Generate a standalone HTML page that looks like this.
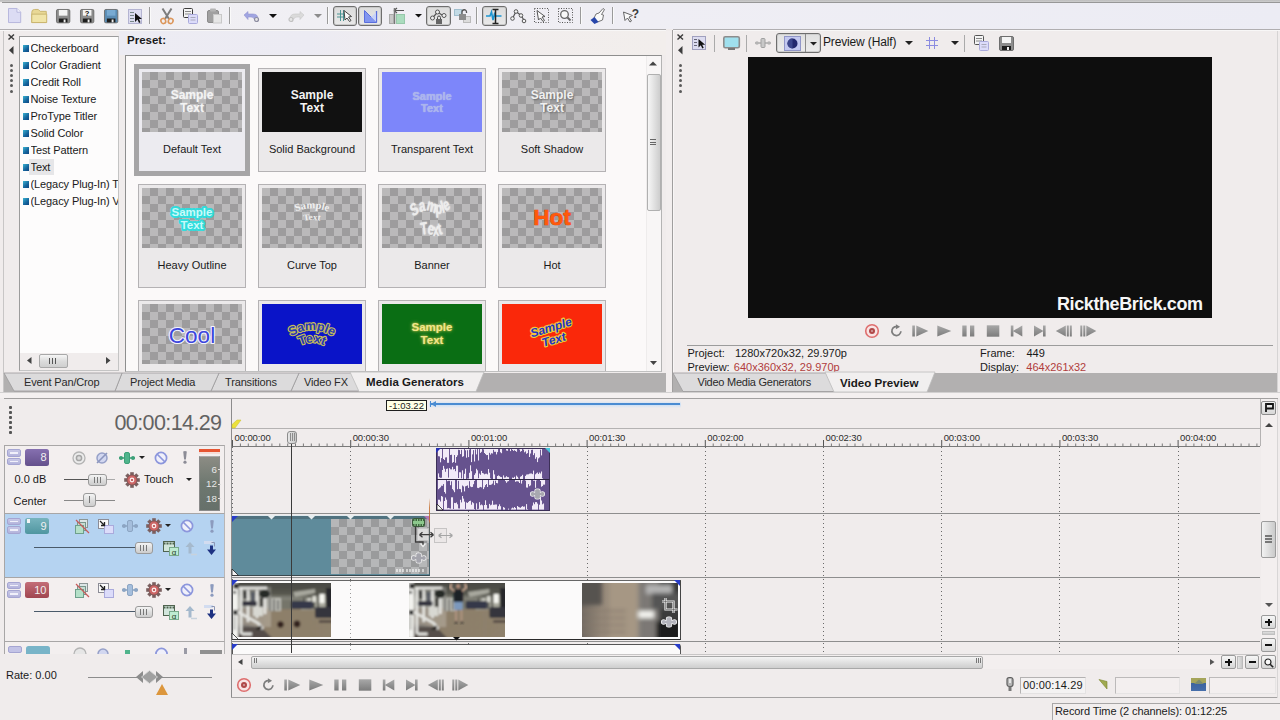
<!DOCTYPE html>
<html><head><meta charset="utf-8"><title>Vegas</title>
<style>
html,body{margin:0;padding:0;}
body{width:1280px;height:720px;overflow:hidden;background:#f0ecec;position:relative;font-family:"Liberation Sans","DejaVu Sans",sans-serif;font-size:11px;color:#1a1a1a;}
div{position:absolute;box-sizing:border-box;}
svg{position:absolute;overflow:visible;}
.t{white-space:nowrap;line-height:13px;font-size:11px;}
.b{font-weight:bold;}
</style></head>
<body>
<div style="left:0px;top:0px;width:1280px;height:2px;background:linear-gradient(#bcbcbc,#cecece);"></div>
<div style="left:2px;top:2px;width:1278px;height:1px;background:#979797;"></div>
<div style="left:0px;top:3px;width:1280px;height:26px;background:linear-gradient(90deg,#f1f0f3,#efeef4 50%,#ececf4);"></div>
<div style="left:0px;top:29px;width:1280px;height:1px;background:#b0aeb0;"></div>
<div style="left:0px;top:30px;width:1280px;height:1px;background:#f8f7f7;"></div>
<svg style="left:8px;top:8px" width="13.2" height="15" viewBox="0 0 14 16"><path d="M0.5 0.5h9l4 4v11h-13z" fill="#dcdcf4" stroke="#b4b4dc"/><path d="M9.5 0.5v4h4" fill="#f4f4ff" stroke="#b4b4dc"/></svg>
<svg style="left:31px;top:9px" width="16.5" height="14" viewBox="0 0 17 15"><path d="M0.5 3.5q0-3 3-3h4l2 2h6.5v12h-15.500z" fill="#e8d896" stroke="#c8b46e"/><path d="M0.500 5.500h16v9h-16z" fill="#f0e4a8" stroke="#c8b46e"/></svg>
<svg style="left:56px;top:9px" width="14.3" height="14.3" viewBox="0 0 15 15"><rect x="0.5" y="0.5" width="14" height="14" rx="1.500" fill="#8c8c8c" stroke="#6e6e6e"/><rect x="3" y="1" width="9" height="6" fill="#f4f4f4"/><rect x="3" y="10" width="9" height="4" fill="#1e1e1e"/><rect x="8" y="11" width="2" height="3" fill="#f0f0f0"/></svg>
<svg style="left:80px;top:9px" width="14.3" height="14.3" viewBox="0 0 15 15"><rect x="0.5" y="0.5" width="14" height="14" rx="1.500" fill="#8c8c8c" stroke="#6e6e6e"/><rect x="3" y="1" width="9" height="6" fill="#f4f4f4"/><rect x="3" y="10" width="9" height="4" fill="#1e1e1e"/><rect x="8" y="11" width="2" height="3" fill="#f0f0f0"/><text x="7.500" y="7" font-size="8" font-weight="bold" text-anchor="middle" fill="#111" font-family="Liberation Sans,sans-serif">?</text></svg>
<svg style="left:104px;top:9px" width="14.3" height="14.3" viewBox="0 0 15 15"><rect x="0.5" y="0.5" width="14" height="14" rx="1.500" fill="#5a8cb4" stroke="#6e6e6e"/><rect x="3" y="1" width="9" height="6" fill="#78aad2"/><rect x="3" y="10" width="9" height="4" fill="#1e1e1e"/><rect x="8" y="11" width="2" height="3" fill="#f0f0f0"/></svg>
<svg style="left:128px;top:9px" width="15" height="15" viewBox="0 0 15 15"><rect x="0.5" y="0.5" width="13" height="14" fill="#dcdcf0" stroke="#b4b4d2"/><path d="M2 3.500h4M2 6.500h4M2 9.500h4M2 12.500h4" stroke="#788" stroke-width="1"/><path d="M7 4v9l2.500-2.500l1.500 3.500l1.500-0.800l-1.500-3.200h3z" fill="#111"/></svg>
<div style="left:149px;top:7px;width:1px;height:17px;background:#9a9a9a;"></div>
<div style="left:150px;top:7px;width:1px;height:17px;background:#fafafa;"></div>
<svg style="left:160px;top:8px" width="14" height="16" viewBox="0 0 14 16"><path d="M2.500 0.500l6.500 10.500M11.500 0.500l-6.500 10.500" stroke="#7d7d7d" stroke-width="2" fill="none"/><ellipse cx="3.300" cy="13" rx="2.300" ry="2.600" fill="none" stroke="#dc965a" stroke-width="1.600" transform="rotate(-25 3.300 13)"/><ellipse cx="10.700" cy="13" rx="2.300" ry="2.600" fill="none" stroke="#dc965a" stroke-width="1.600" transform="rotate(25 10.700 13)"/></svg>
<svg style="left:183px;top:8px" width="16" height="16" viewBox="0 0 16 16"><rect x="0.500" y="0.500" width="9" height="9" rx="1" fill="#f4f4f4" stroke="#3c3c3c"/><path d="M2 3.500h6M2 6h6" stroke="#888"/><rect x="5.500" y="6.500" width="9" height="9" rx="1" fill="#dcdcfa" stroke="#aaaadc"/><path d="M7.500 9.500h5M7.500 12h5" stroke="#aab"/></svg>
<svg style="left:207px;top:8px" width="16" height="16" viewBox="0 0 16 16"><rect x="0.500" y="2.500" width="11" height="12" rx="1.500" fill="#a0a0a0" stroke="#8c8c8c"/><rect x="3" y="0.500" width="6" height="3" rx="1" fill="#b4b4b4"/><rect x="6.500" y="6.500" width="8" height="8.500" fill="#e6e6e6" stroke="#c8c8c8"/></svg>
<div style="left:229px;top:7px;width:1px;height:17px;background:#9a9a9a;"></div>
<div style="left:230px;top:7px;width:1px;height:17px;background:#fafafa;"></div>
<svg style="left:243px;top:11px" width="17" height="12" viewBox="0 0 17 12"><path d="M1 4l4-3.500v2.500h5q5 0 5 5h-4q0-2-3-2h-3v2.500z" fill="#a0a5e1" stroke="#9696d2" stroke-width="0.600"/><circle cx="13.500" cy="8.500" r="2" fill="#e6e6e6" stroke="#8c8ca0" stroke-width="1.200"/></svg>
<svg style="left:269px;top:14px" width="8" height="4.5" viewBox="0 0 8 4.5"><path d="M0 0h8l-4.0 4.0z" fill="#111"/></svg>
<svg style="left:288px;top:11px" width="17" height="12" viewBox="0 0 17 12"><path d="M16 4l-4-3.500v2.500h-5q-5 0-5 5h4q0-2 3-2h3v2.500z" fill="#dadada" stroke="#c8c8c8" stroke-width="0.600"/><circle cx="3" cy="8.500" r="2" fill="#e6e6e6" stroke="#c0c0c0" stroke-width="1.200"/></svg>
<svg style="left:314px;top:14px" width="8" height="4.5" viewBox="0 0 8 4.5"><path d="M0 0h8l-4.0 4.0z" fill="#8c8c8c"/></svg>
<div style="left:327px;top:7px;width:1px;height:17px;background:#9a9a9a;"></div>
<div style="left:328px;top:7px;width:1px;height:17px;background:#fafafa;"></div>
<div style="left:333px;top:6px;width:24px;height:20px;border:1px solid #6e6e6e;border-radius:3px;background:linear-gradient(#dcdcdc,#e9e9e9);box-shadow:inset 0 0 0 1px #c8c8c8;"></div>
<svg style="left:337px;top:8px" width="17" height="16" viewBox="0 0 17 16"><path d="M3.500 2v11M6.500 2v11M0 6h10M0 9h10" stroke="#3c8c8c" stroke-width="0.900"/><path d="M7 2.500l7.500 6l-3 0.500l2.500 3.500l-1.500 1l-2.500-3.500l-2 2z" fill="#fafafa" stroke="#464646" stroke-width="1"/></svg>
<div style="left:358px;top:6px;width:24px;height:20px;border:1px solid #6e6e6e;border-radius:3px;background:linear-gradient(#dcdcdc,#e9e9e9);box-shadow:inset 0 0 0 1px #c8c8c8;"></div>
<svg style="left:364px;top:10px" width="13" height="14" viewBox="0 0 13 14"><path d="M0.500 0.500l12 12h-12z" fill="#8296f0" stroke="#5a6edc"/><path d="M12.500 1v11.500" stroke="#5a6edc" stroke-width="1.300"/><path d="M12 2.500v9.500l-5-5z" fill="#c8d2f8"/></svg>
<svg style="left:389px;top:8px" width="17" height="16" viewBox="0 0 17 16"><path d="M5 2.500h10M5 2.500l3-2.500M5 2.500l3 2.500" stroke="#555" stroke-width="1.200" fill="none"/><path d="M5.500 0v16" stroke="#777" stroke-width="1.500"/><rect x="0.500" y="6.500" width="4" height="9" fill="#c8c8c8" stroke="#aaa"/><rect x="7.500" y="6.500" width="8" height="9" fill="#aadcbe" stroke="#96c8aa"/></svg>
<svg style="left:415px;top:14px" width="7" height="4.0" viewBox="0 0 7 4.0"><path d="M0 0h7l-3.5 3.5z" fill="#111"/></svg>
<div style="left:426px;top:6px;width:25px;height:20px;border:1px solid #6e6e6e;border-radius:3px;background:linear-gradient(#dcdcdc,#e9e9e9);box-shadow:inset 0 0 0 1px #c8c8c8;"></div>
<svg style="left:430px;top:9px" width="17" height="16" viewBox="0 0 17 16"><path d="M2.500 9l5-6l6 4" stroke="#555" stroke-width="1.200" fill="none"/><circle cx="2.500" cy="9" r="2" fill="#f0f0f0" stroke="#555"/><circle cx="7.500" cy="3" r="2" fill="#f0f0f0" stroke="#555"/><circle cx="14" cy="6.500" r="2" fill="#f0f0f0" stroke="#555"/><rect x="6" y="10" width="6" height="5" fill="#666"/><path d="M7.500 10v-1.500a1.500 1.500 0 0 1 3 0v1.500" stroke="#444" fill="none"/></svg>
<svg style="left:454px;top:8px" width="17" height="16" viewBox="0 0 17 16"><rect x="0.500" y="1.500" width="7" height="6" fill="#c3dbe6" stroke="#a0bece"/><rect x="9.500" y="8.500" width="7" height="6" fill="#dcdcdc" stroke="#bbb"/><rect x="5" y="6" width="7" height="6" fill="#8c8c8c"/><path d="M8 6v-2a2.200 2.200 0 0 1 4.500 0v1" stroke="#555" stroke-width="1.300" fill="none"/></svg>
<div style="left:476px;top:7px;width:1px;height:17px;background:#9a9a9a;"></div>
<div style="left:477px;top:7px;width:1px;height:17px;background:#fafafa;"></div>
<div style="left:482px;top:6px;width:25px;height:20px;border:1px solid #6e6e6e;border-radius:3px;background:linear-gradient(#dcdcdc,#e9e9e9);box-shadow:inset 0 0 0 1px #c8c8c8;"></div>
<svg style="left:486px;top:9px" width="17" height="15" viewBox="0 0 17 15"><path d="M0 7h4l1.500-4l1.500 8l1.500-6l1 2h6" stroke="#1e96d2" stroke-width="1.600" fill="none"/><path d="M6.500 0.500h6M6.500 14.500h6M9.500 0.500v14" stroke="#222" stroke-width="1.500"/></svg>
<svg style="left:510px;top:9px" width="17" height="15" viewBox="0 0 17 15"><path d="M2.500 9.500l3.500-7l5 4l3.500 5.500" stroke="#555" stroke-width="1.200" fill="none"/><circle cx="2.500" cy="9.500" r="1.800" fill="#f4f4f4" stroke="#555"/><circle cx="6" cy="2.500" r="1.800" fill="#f4f4f4" stroke="#555"/><circle cx="11" cy="6.500" r="1.800" fill="#f4f4f4" stroke="#555"/><circle cx="14" cy="12" r="1.800" fill="#f4f4f4" stroke="#555"/></svg>
<svg style="left:534px;top:8px" width="16" height="16" viewBox="0 0 16 16"><rect x="0.500" y="0.500" width="14" height="14" fill="none" stroke="#555" stroke-dasharray="1 1.500"/><path d="M3 2.500l8 6l-3 0.500l2.500 3.500l-1.500 1l-2.500-3.500l-2 2z" fill="#fafafa" stroke="#555"/></svg>
<svg style="left:558px;top:8px" width="16" height="16" viewBox="0 0 16 16"><rect x="0.500" y="0.500" width="14" height="14" fill="none" stroke="#555" stroke-dasharray="1 1.500"/><circle cx="6.500" cy="6.500" r="3.800" fill="#f8f8f8" stroke="#666" stroke-width="1.300"/><path d="M9.500 9.500l3 3" stroke="#666" stroke-width="2"/></svg>
<div style="left:580px;top:7px;width:1px;height:17px;background:#9a9a9a;"></div>
<div style="left:581px;top:7px;width:1px;height:17px;background:#fafafa;"></div>
<svg style="left:590px;top:8px" width="16" height="16" viewBox="0 0 16 16"><path d="M4 10l2-4l3-1l4-4.500l1.500 1l-3 5l2 0.500l-1 5l-5 2z" fill="#fafafa" stroke="#666" stroke-width="0.900"/><path d="M0.500 12l4-3l4 5l-4 2z" fill="#2846aa"/></svg>
<div style="left:612px;top:7px;width:1px;height:17px;background:#9a9a9a;"></div>
<div style="left:613px;top:7px;width:1px;height:17px;background:#fafafa;"></div>
<svg style="left:623px;top:9px" width="17" height="15" viewBox="0 0 17 15"><path d="M0.500 3l9 3.500l-3.500 1.500l2.500 4l-1.500 1l-2.500-4l-2.500 2.500z" fill="#fafafa" stroke="#555" stroke-width="0.900"/><text x="12.500" y="9" font-size="12" font-weight="bold" text-anchor="middle" fill="#3c3c3c" font-family="Liberation Sans,sans-serif">?</text></svg>
<div style="left:3px;top:31px;width:1px;height:361px;background:#c8c6c6;"></div>
<svg style="left:8px;top:34px" width="7" height="6" viewBox="0 0 7 6"><path d="M0.500 0.500l5.500 5M6 0.500l-5.500 5" stroke="#3c3c3c" stroke-width="1.500"/></svg>
<svg style="left:9px;top:46px" width="5" height="9" viewBox="0 0 5 9"><path d="M4.500 0v8.500l-4.500-4.200z" fill="#3c3c3c"/></svg>
<div style="left:9.5px;top:63.5px;width:3px;height:3px;background:#5a5a5a;border-radius:1.500px;"></div>
<div style="left:9.5px;top:68.7px;width:3px;height:3px;background:#5a5a5a;border-radius:1.500px;"></div>
<div style="left:9.5px;top:73.9px;width:3px;height:3px;background:#5a5a5a;border-radius:1.500px;"></div>
<div style="left:9.5px;top:79.1px;width:3px;height:3px;background:#5a5a5a;border-radius:1.500px;"></div>
<div style="left:9.5px;top:84.3px;width:3px;height:3px;background:#5a5a5a;border-radius:1.500px;"></div>
<div style="left:9.5px;top:89.5px;width:3px;height:3px;background:#5a5a5a;border-radius:1.500px;"></div>
<div style="left:19px;top:36px;width:100px;height:335px;background:#fdfcfc;border:1px solid #9c9c9c;border-right-color:#c4c4c4;border-bottom-color:#c4c4c4;"></div>
<div style="left:23px;top:45.400000000000006px;width:5.5px;height:7px;background:linear-gradient(135deg,#3cb4d2,#14649c 60%,#0f4682);"></div>
<div class="t" style="left:30.500px;top:42.4px;width:87px;overflow:hidden;letter-spacing:-0.100px">Checkerboard</div>
<div style="left:23px;top:62.400000000000006px;width:5.5px;height:7px;background:linear-gradient(135deg,#3cb4d2,#14649c 60%,#0f4682);"></div>
<div class="t" style="left:30.500px;top:59.4px;width:87px;overflow:hidden;letter-spacing:-0.100px">Color Gradient</div>
<div style="left:23px;top:79.4px;width:5.5px;height:7px;background:linear-gradient(135deg,#3cb4d2,#14649c 60%,#0f4682);"></div>
<div class="t" style="left:30.500px;top:76.4px;width:87px;overflow:hidden;letter-spacing:-0.100px">Credit Roll</div>
<div style="left:23px;top:96.4px;width:5.5px;height:7px;background:linear-gradient(135deg,#3cb4d2,#14649c 60%,#0f4682);"></div>
<div class="t" style="left:30.500px;top:93.4px;width:87px;overflow:hidden;letter-spacing:-0.100px">Noise Texture</div>
<div style="left:23px;top:113.4px;width:5.5px;height:7px;background:linear-gradient(135deg,#3cb4d2,#14649c 60%,#0f4682);"></div>
<div class="t" style="left:30.500px;top:110.4px;width:87px;overflow:hidden;letter-spacing:-0.100px">ProType Titler</div>
<div style="left:23px;top:130.39999999999998px;width:5.5px;height:7px;background:linear-gradient(135deg,#3cb4d2,#14649c 60%,#0f4682);"></div>
<div class="t" style="left:30.500px;top:127.4px;width:87px;overflow:hidden;letter-spacing:-0.100px">Solid Color</div>
<div style="left:23px;top:147.39999999999998px;width:5.5px;height:7px;background:linear-gradient(135deg,#3cb4d2,#14649c 60%,#0f4682);"></div>
<div class="t" style="left:30.500px;top:144.4px;width:87px;overflow:hidden;letter-spacing:-0.100px">Test Pattern</div>
<div style="left:29px;top:159.2px;width:25px;height:16px;background:#e6e6e8;"></div>
<div style="left:23px;top:164.39999999999998px;width:5.5px;height:7px;background:linear-gradient(135deg,#3cb4d2,#14649c 60%,#0f4682);"></div>
<div class="t" style="left:30.500px;top:161.4px;width:87px;overflow:hidden;letter-spacing:-0.100px">Text</div>
<div style="left:23px;top:181.39999999999998px;width:5.5px;height:7px;background:linear-gradient(135deg,#3cb4d2,#14649c 60%,#0f4682);"></div>
<div class="t" style="left:30.500px;top:178.4px;width:87px;overflow:hidden;letter-spacing:-0.100px">(Legacy Plug-In) T</div>
<div style="left:23px;top:198.39999999999998px;width:5.5px;height:7px;background:linear-gradient(135deg,#3cb4d2,#14649c 60%,#0f4682);"></div>
<div class="t" style="left:30.500px;top:195.4px;width:87px;overflow:hidden;letter-spacing:-0.100px">(Legacy Plug-In) V</div>
<div style="left:20px;top:353px;width:98px;height:17px;background:#f0ecec;"></div>
<svg style="left:27px;top:357px" width="5" height="7" viewBox="0 0 5 7"><path d="M4.500 0v7l-4.500-3.500z" fill="#444"/></svg>
<svg style="left:106px;top:357px" width="5" height="7" viewBox="0 0 5 7"><path d="M0 0v7l4.500-3.500z" fill="#444"/></svg>
<div style="left:39px;top:354px;width:29px;height:14px;border:1px solid #a8a8a8;border-radius:2px;background:linear-gradient(#f6f6f6,#dcdcdc 50%,#cfcfcf);"></div>
<div style="left:49px;top:358px;width:1px;height:6px;background:#555;"></div>
<div style="left:52px;top:358px;width:1px;height:6px;background:#555;"></div>
<div style="left:55px;top:358px;width:1px;height:6px;background:#555;"></div>
<div style="left:119px;top:31px;width:547px;height:24px;background:linear-gradient(90deg,#edecf3,#ecebf3 35%,#f1edee 55%,#f2eeec);"></div>
<div class="t" style="left:127px;top:33.5px;font-weight:bold;font-size:11.500px;">Preset:</div>
<div style="left:125px;top:55px;width:537px;height:317px;background:#fbf9f9;border:1px solid #8e8e8e;border-right-color:#b4b4b4;border-bottom-color:#c0c0c0;"></div>
<div style="left:126px;top:56px;width:520px;height:315px;overflow:hidden;">
<div style="left:8px;top:8px;width:116px;height:112px;background:#a6a5a6;"></div>
<div style="left:13px;top:13px;width:106px;height:102px;background:#ecebf0;"></div>
<div style="left:16px;top:16px;width:100px;height:60px;overflow:hidden;background-color:#bab9ba;background-image:linear-gradient(45deg,#9d9c9d 25%,transparent 25%,transparent 75%,#9d9c9d 75%),linear-gradient(45deg,#9d9c9d 25%,transparent 25%,transparent 75%,#9d9c9d 75%);background-size:16px 16px;background-position:0 0,8px 8px;"><div style="left:0;top:17px;width:100px;text-align:center;font-weight:bold;font-size:12px;line-height:13px;color:#f4f4f4;text-shadow:0 0 2px rgba(255,255,255,.6);">Sample<br>Text</div></div>
<div class="t" style="left:12px;top:87px;width:108px;text-align:center;">Default Text</div>
<div style="left:132px;top:12px;width:108px;height:104px;background:#ebe9ea;border:1px solid #b4b2b4;"></div>
<div style="left:136px;top:16px;width:100px;height:60px;overflow:hidden;background:#111111;"><div style="left:0;top:17px;width:100px;text-align:center;font-weight:bold;font-size:12px;line-height:13px;color:#f4f4f4;">Sample<br>Text</div></div>
<div class="t" style="left:132px;top:87px;width:108px;text-align:center;">Solid Background</div>
<div style="left:252px;top:12px;width:108px;height:104px;background:#ebe9ea;border:1px solid #b4b2b4;"></div>
<div style="left:256px;top:16px;width:100px;height:60px;overflow:hidden;background:#7d86fa;"><div style="left:0;top:18px;width:100px;text-align:center;font-weight:bold;font-size:12px;line-height:12px;color:#aab4ee;font-size:11px;text-shadow:0 0 1px #c8d2e6;">Sample<br>Text</div></div>
<div class="t" style="left:252px;top:87px;width:108px;text-align:center;">Transparent Text</div>
<div style="left:372px;top:12px;width:108px;height:104px;background:#ebe9ea;border:1px solid #b4b2b4;"></div>
<div style="left:376px;top:16px;width:100px;height:60px;overflow:hidden;background-color:#bab9ba;background-image:linear-gradient(45deg,#9d9c9d 25%,transparent 25%,transparent 75%,#9d9c9d 75%),linear-gradient(45deg,#9d9c9d 25%,transparent 25%,transparent 75%,#9d9c9d 75%);background-size:16px 16px;background-position:0 0,8px 8px;"><div style="left:0;top:17px;width:100px;text-align:center;font-weight:bold;font-size:12px;line-height:13px;color:#f0f0f0;text-shadow:1px 1px 2px #666;">Sample<br>Text</div></div>
<div class="t" style="left:372px;top:87px;width:108px;text-align:center;">Soft Shadow</div>
<div style="left:12px;top:128px;width:108px;height:104px;background:#ebe9ea;border:1px solid #b4b2b4;"></div>
<div style="left:16px;top:132px;width:100px;height:60px;overflow:hidden;background-color:#bab9ba;background-image:linear-gradient(45deg,#9d9c9d 25%,transparent 25%,transparent 75%,#9d9c9d 75%),linear-gradient(45deg,#9d9c9d 25%,transparent 25%,transparent 75%,#9d9c9d 75%);background-size:16px 16px;background-position:0 0,8px 8px;"><svg style="left:0;top:0" width="100" height="60" viewBox="0 0 100 60" font-family="Liberation Sans,sans-serif" font-weight="bold" text-anchor="middle" ><g style="paint-order:stroke" stroke="#32dcdc" stroke-width="4" stroke-linejoin="round" fill="#c8fafa" font-size="11.500"><text x="50" y="28">Sample</text><text x="50" y="40.500">Text</text></g></svg></div>
<div class="t" style="left:12px;top:203px;width:108px;text-align:center;">Heavy Outline</div>
<div style="left:132px;top:128px;width:108px;height:104px;background:#ebe9ea;border:1px solid #b4b2b4;"></div>
<div style="left:136px;top:132px;width:100px;height:60px;overflow:hidden;background-color:#bab9ba;background-image:linear-gradient(45deg,#9d9c9d 25%,transparent 25%,transparent 75%,#9d9c9d 75%),linear-gradient(45deg,#9d9c9d 25%,transparent 25%,transparent 75%,#9d9c9d 75%);background-size:16px 16px;background-position:0 0,8px 8px;"><svg style="left:0;top:0" width="100" height="60" viewBox="0 0 100 60" font-family="Liberation Sans,sans-serif" font-weight="bold" text-anchor="middle" ><defs><path id="ct1" d="M26 27Q50 14 74 27"/><path id="ct2" d="M34 35Q50 29 66 35"/></defs><g fill="#f0f0f0" font-family="Liberation Serif,serif" font-size="10.500"><text><textPath href="#ct1" startOffset="50%">Sample</textPath></text><text font-size="9"><textPath href="#ct2" startOffset="50%">Text</textPath></text></g></svg></div>
<div class="t" style="left:132px;top:203px;width:108px;text-align:center;">Curve Top</div>
<div style="left:252px;top:128px;width:108px;height:104px;background:#ebe9ea;border:1px solid #b4b2b4;"></div>
<div style="left:256px;top:132px;width:100px;height:60px;overflow:hidden;background-color:#bab9ba;background-image:linear-gradient(45deg,#9d9c9d 25%,transparent 25%,transparent 75%,#9d9c9d 75%),linear-gradient(45deg,#9d9c9d 25%,transparent 25%,transparent 75%,#9d9c9d 75%);background-size:16px 16px;background-position:0 0,8px 8px;"><svg style="left:0;top:0" width="100" height="60" viewBox="0 0 100 60" font-family="Liberation Sans,sans-serif" font-weight="bold" text-anchor="middle" ><defs><path id="bn1" d="M28 30Q40 20 50 24T72 18"/><path id="bn2" d="M38 45Q45 43 50 44.500T62 43"/></defs><g fill="#ececec" font-size="13" style="text-shadow:0 0 2px #fff"><text transform="translate(0,-8) scale(1,1.350)" ><textPath href="#bn1" startOffset="50%" textLength="40" lengthAdjust="spacingAndGlyphs">Sample</textPath></text><text transform="translate(0,-13) scale(1,1.350)"><textPath href="#bn2" startOffset="50%" textLength="22" lengthAdjust="spacingAndGlyphs">Text</textPath></text></g></svg></div>
<div class="t" style="left:252px;top:203px;width:108px;text-align:center;">Banner</div>
<div style="left:372px;top:128px;width:108px;height:104px;background:#ebe9ea;border:1px solid #b4b2b4;"></div>
<div style="left:376px;top:132px;width:100px;height:60px;overflow:hidden;background-color:#bab9ba;background-image:linear-gradient(45deg,#9d9c9d 25%,transparent 25%,transparent 75%,#9d9c9d 75%),linear-gradient(45deg,#9d9c9d 25%,transparent 25%,transparent 75%,#9d9c9d 75%);background-size:16px 16px;background-position:0 0,8px 8px;"><svg style="left:0;top:0" width="100" height="60" viewBox="0 0 100 60" font-family="Liberation Sans,sans-serif" font-weight="bold" text-anchor="middle" ><text x="50" y="37" font-size="22.500" fill="#ff5a0a" stroke="#e62d00" stroke-width="0.700" style="paint-order:stroke">Hot</text></svg></div>
<div class="t" style="left:372px;top:203px;width:108px;text-align:center;">Hot</div>
<div style="left:12px;top:244px;width:108px;height:104px;background:#ebe9ea;border:1px solid #b4b2b4;"></div>
<div style="left:16px;top:248px;width:100px;height:60px;overflow:hidden;background-color:#bab9ba;background-image:linear-gradient(45deg,#9d9c9d 25%,transparent 25%,transparent 75%,#9d9c9d 75%),linear-gradient(45deg,#9d9c9d 25%,transparent 25%,transparent 75%,#9d9c9d 75%);background-size:16px 16px;background-position:0 0,8px 8px;"><svg style="left:0;top:0" width="100" height="60" viewBox="0 0 100 60" font-family="Liberation Sans,sans-serif" font-weight="bold" text-anchor="middle" ><text x="50" y="38.500" font-size="22.500" font-weight="normal" fill="#3c46dc" stroke="#f4f4ff" stroke-width="2.200" stroke-linejoin="round" style="paint-order:stroke">Cool</text></svg></div>
<div class="t" style="left:12px;top:319px;width:108px;text-align:center;">Cool</div>
<div style="left:132px;top:244px;width:108px;height:104px;background:#ebe9ea;border:1px solid #b4b2b4;"></div>
<div style="left:136px;top:248px;width:100px;height:60px;overflow:hidden;background:#0a14c8;"><svg style="left:0;top:0" width="100" height="60" viewBox="0 0 100 60" font-family="Liberation Sans,sans-serif" font-weight="bold" text-anchor="middle" ><defs><path id="bl1" d="M28 33Q50 19 72 33"/><path id="bl2" d="M37 42Q50 35 63 42"/></defs><g fill="#2838b4" stroke="#c8be5a" stroke-width="2.200" stroke-linejoin="round" style="paint-order:stroke" font-size="12.500"><text><textPath href="#bl1" startOffset="50%">Sample</textPath></text><text><textPath href="#bl2" startOffset="50%">Text</textPath></text></g></svg></div>
<div style="left:252px;top:244px;width:108px;height:104px;background:#ebe9ea;border:1px solid #b4b2b4;"></div>
<div style="left:256px;top:248px;width:100px;height:60px;overflow:hidden;background:#0a6e14;"><div style="left:0;top:17px;width:100px;text-align:center;font-weight:bold;font-size:12px;line-height:13px;color:#f0e68c;font-size:11.500px;text-shadow:0 0 2px #e6c83c,0 0 4px rgba(230,220,120,.6);">Sample<br>Text</div></div>
<div style="left:372px;top:244px;width:108px;height:104px;background:#ebe9ea;border:1px solid #b4b2b4;"></div>
<div style="left:376px;top:248px;width:100px;height:60px;overflow:hidden;background:#fa280a;"><svg style="left:0;top:0" width="100" height="60" viewBox="0 0 100 60" font-family="Liberation Sans,sans-serif" font-weight="bold" text-anchor="middle" ><g transform="rotate(-17 50 30)" fill="#1e32c8" stroke="#f0c83c" stroke-width="2.200" stroke-linejoin="round" style="paint-order:stroke" font-size="12" font-style="italic"><text x="51" y="27.500">Sample</text><text x="50" y="40">Text</text></g></svg></div>
</div>
<div style="left:646px;top:56px;width:15px;height:315px;background:#f8f6f6;border-left:1px solid #eeecec;"></div>
<svg style="left:649px;top:61px" width="8" height="5" viewBox="0 0 8 5"><path d="M0 4.500l4-4l4 4z" fill="#444"/></svg>
<svg style="left:650px;top:361px" width="7" height="4" viewBox="0 0 7 4"><path d="M0 0h7l-3.500 4z" fill="#444"/></svg>
<div style="left:646.5px;top:74px;width:14px;height:137px;border:1px solid #b0b0b0;border-radius:2px;background:linear-gradient(90deg,#f6f6f6,#e6e6e6 40%,#cdcdcd);"></div>
<div style="left:650px;top:139.0px;width:6px;height:1px;background:#666;"></div>
<div style="left:650px;top:141.5px;width:6px;height:1px;background:#666;"></div>
<div style="left:650px;top:144.0px;width:6px;height:1px;background:#666;"></div>
<div style="left:4px;top:372.5px;width:662px;height:20px;background:#b2b0b0;"></div>
<svg style="left:0;top:0" width="1280" height="400"><polygon points="299,373 352,373 360,391 291,391" fill="#dcdbdc" stroke="#9c9b9c" stroke-width="0.8"/></svg>
<svg style="left:0;top:0" width="1280" height="400"><polygon points="219,373 299,373 291,391 211,391" fill="#dcdbdc" stroke="#9c9b9c" stroke-width="0.8"/></svg>
<svg style="left:0;top:0" width="1280" height="400"><polygon points="122,373 219,373 211,391 115,391" fill="#dcdbdc" stroke="#9c9b9c" stroke-width="0.8"/></svg>
<svg style="left:0;top:0" width="1280" height="400"><polygon points="4,373 122,373 115,391 14,391" fill="#dcdbdc" stroke="#9c9b9c" stroke-width="0.8"/></svg>
<svg style="left:0;top:0" width="1280" height="400"><polygon points="350,372 484,372 476,391.5 359,391.5" fill="#f1efef" stroke="#bdbcbd" stroke-width="0.8"/></svg>
<div class="t" style="left:24px;top:375.5px;color:#2a2a2a;letter-spacing:-0.150px;">Event Pan/Crop</div>
<div class="t" style="left:130px;top:375.5px;color:#2a2a2a;letter-spacing:-0.150px;">Project Media</div>
<div class="t" style="left:225px;top:375.5px;color:#2a2a2a;letter-spacing:-0.150px;">Transitions</div>
<div class="t" style="left:304px;top:375.5px;color:#2a2a2a;letter-spacing:-0.150px;">Video FX</div>
<div class="t" style="left:366px;top:375.5px;font-weight:bold;font-size:11.500px;letter-spacing:0.050px;">Media Generators</div>
<div style="left:666px;top:31px;width:6px;height:362px;background:#f2eeee;"></div>
<div style="left:666px;top:29px;width:6.5px;height:2px;background:#f0ecec;"></div>
<div style="left:672px;top:30px;width:1px;height:363px;background:#a09e9e;"></div>
<div style="left:673px;top:31px;width:1px;height:362px;background:#f8f6f6;"></div>
<div style="left:1277px;top:31px;width:1px;height:362px;background:#d6d4d4;"></div>
<svg style="left:677.3px;top:34px" width="7" height="6" viewBox="0 0 7 6"><path d="M0.500 0.500l5.500 5M6 0.500l-5.500 5" stroke="#3c3c3c" stroke-width="1.500"/></svg>
<svg style="left:678.3px;top:46px" width="5" height="9" viewBox="0 0 5 9"><path d="M4.500 0v8.500l-4.500-4.200z" fill="#3c3c3c"/></svg>
<div style="left:678.8px;top:63.5px;width:3px;height:3px;background:#5a5a5a;border-radius:1.500px;"></div>
<div style="left:678.8px;top:68.7px;width:3px;height:3px;background:#5a5a5a;border-radius:1.500px;"></div>
<div style="left:678.8px;top:73.9px;width:3px;height:3px;background:#5a5a5a;border-radius:1.500px;"></div>
<div style="left:678.8px;top:79.1px;width:3px;height:3px;background:#5a5a5a;border-radius:1.500px;"></div>
<div style="left:678.8px;top:84.3px;width:3px;height:3px;background:#5a5a5a;border-radius:1.500px;"></div>
<div style="left:678.8px;top:89.5px;width:3px;height:3px;background:#5a5a5a;border-radius:1.500px;"></div>
<svg style="left:692px;top:36px" width="15" height="14" viewBox="0 0 15 14"><rect x="0.500" y="0.500" width="13" height="13" fill="#dcdcf0" stroke="#a0a0be"/><path d="M2 3.500h3M2 6.500h3M2 9.500h3" stroke="#667" stroke-width="1"/><path d="M6.500 3v8.500l2.300-2.300l1.500 3.300l1.400-0.700l-1.500-3.100h3z" fill="#111"/></svg>
<div style="left:714px;top:35px;width:1px;height:17px;background:#aaa;"></div>
<svg style="left:723px;top:36px" width="18" height="15" viewBox="0 0 18 15"><rect x="0.800" y="0.800" width="15.500" height="11" rx="1.500" fill="#a0e0ee" stroke="#8c8c8c" stroke-width="1.600"/><rect x="5" y="12" width="7" height="2" fill="#787878"/></svg>
<div style="left:746px;top:35px;width:1px;height:17px;background:#aaa;"></div>
<svg style="left:755px;top:38px" width="17" height="10" viewBox="0 0 17 10"><path d="M0 5h16" stroke="#aaa" stroke-width="1.500"/><circle cx="2" cy="5" r="1.800" fill="#b4b4b4"/><circle cx="14" cy="5" r="1.800" fill="#b4b4b4"/><rect x="6" y="0.500" width="4" height="9" rx="1" fill="#c8c8c8" stroke="#a0a0a0"/></svg>
<div style="left:776px;top:33px;width:45px;height:20px;border:1px solid #6e6e6e;border-radius:3px;background:linear-gradient(#e0e0e0,#ececec);box-shadow:inset 0 0 0 1px #cfcfcf;"></div>
<div style="left:805px;top:34px;width:1px;height:18px;background:#8c8c8c;"></div>
<svg style="left:784px;top:36px" width="17" height="15" viewBox="0 0 17 15"><rect x="0.500" y="0.500" width="16" height="14" fill="#c3c8f0" stroke="#9196c8"/><circle cx="8.500" cy="7.500" r="5" fill="#23286e"/><path d="M8.500 2.500a5 5 0 0 0 0 10z" fill="#3c468c"/></svg>
<svg style="left:810px;top:41.5px" width="7" height="4.0" viewBox="0 0 7 4.0"><path d="M0 0h7l-3.5 3.5z" fill="#222"/></svg>
<div class="t" style="left:823px;top:36px;font-size:12px;letter-spacing:-0.150px;color:#1a1a1a;">Preview (Half)</div>
<svg style="left:905px;top:41px" width="8" height="4.5" viewBox="0 0 8 4.5"><path d="M0 0h8l-4.0 4.0z" fill="#222"/></svg>
<svg style="left:926px;top:37px" width="13" height="12" viewBox="0 0 13 12"><path d="M3.500 0v12M8.500 0v12M0 3.500h12M0 8.500h12" stroke="#8c8ce0" stroke-width="1"/></svg>
<svg style="left:951px;top:41px" width="8" height="4.5" viewBox="0 0 8 4.5"><path d="M0 0h8l-4.0 4.0z" fill="#222"/></svg>
<div style="left:964px;top:35px;width:1px;height:17px;background:#aaa;"></div>
<svg style="left:974px;top:35px" width="16" height="16" viewBox="0 0 16 16"><rect x="0.500" y="0.500" width="9" height="9" rx="1" fill="#f4f4f4" stroke="#555"/><path d="M2 3.500h6M2 6h6" stroke="#888"/><rect x="5.500" y="6.500" width="9" height="9" rx="1" fill="#dcdcfa" stroke="#aaaadc"/><path d="M7.500 9.500h5M7.500 12h5" stroke="#aab"/></svg>
<svg style="left:999px;top:36px" width="15" height="15" viewBox="0 0 15 15"><rect x="0.500" y="0.500" width="14" height="14" rx="1.500" fill="#8c8c8c" stroke="#6e6e6e"/><rect x="3" y="1" width="9" height="6" fill="#f4f4f4"/><rect x="3" y="10" width="9" height="4" fill="#1e1e1e"/><rect x="8" y="11" width="2" height="3" fill="#f0f0f0"/></svg>
<div style="left:748px;top:57px;width:464px;height:261px;background:#0e0e0e;"></div>
<div class="t" style="left:1057px;top:294px;font-weight:bold;font-size:18px;line-height:20px;color:#f6f6f6;letter-spacing:-0.400px;">RicktheBrick.com</div>
<svg style="left:871.9px;top:330.8px" width="1" height="1"><g transform="scale(1.0)"><defs><linearGradient id="tg871" x1="0" y1="0" x2="0" y2="1"><stop offset="0" stop-color="#a8a8a8"/><stop offset="1" stop-color="#7c7c7c"/></linearGradient></defs><circle cx="0" cy="0" r="6.300" fill="#f8e4e4" stroke="#de6e6e" stroke-width="1.600"/><circle cx="0" cy="0" r="3" fill="#b04848"/><circle cx="0" cy="0" r="1.100" fill="#cfa0a0"/><path d="M26.4 -4A4.500 4.500 0 1 0 28.9 0.300" fill="none" stroke="#7d7d7d" stroke-width="1.700"/><path d="M23.9 -6.800l4.200 2.500l-4.200 2.500z" fill="#7d7d7d"/><rect x="40.3" y="-5.500" width="2.600" height="11" fill="url(#tg871)"/><path d="M44.3 -5.500l12 5.500l-12 5.500z" fill="url(#tg871)"/><path d="M65.3 -5.500l14 5.500l-14 5.500z" fill="url(#tg871)"/><rect x="90.3" y="-5.500" width="4.300" height="11" fill="url(#tg871)"/><rect x="98.0" y="-5.500" width="4.300" height="11" fill="url(#tg871)"/><rect x="114.8" y="-5.700" width="12.500" height="11.400" fill="url(#tg871)"/><rect x="138.8" y="-5.500" width="2.600" height="11" fill="url(#tg871)"/><path d="M150.3 -5.500l-9.500 5.500l9.500 5.500z" fill="url(#tg871)"/><path d="M162 -5.500l9.500 5.500l-9.500 5.500z" fill="url(#tg871)"/><rect x="171" y="-5.500" width="2.600" height="11" fill="url(#tg871)"/><path d="M193.8 -5.500l-10 5.500l10 5.500z" fill="url(#tg871)"/><rect x="194.8" y="-5.500" width="2" height="11" fill="url(#tg871)"/><rect x="197.8" y="-5.500" width="2" height="11" fill="url(#tg871)"/><rect x="208.3" y="-5.500" width="2" height="11" fill="url(#tg871)"/><rect x="211.3" y="-5.500" width="2" height="11" fill="url(#tg871)"/><path d="M214.3 -5.500l10 5.500l-10 5.500z" fill="url(#tg871)"/></g></svg>
<div style="left:687px;top:345px;width:586px;height:1px;background:#9c9c9c;"></div>
<div class="t" style="left:687.5px;top:347.3px;">Project:</div>
<div class="t" style="left:735px;top:347.3px;">1280x720x32, 29.970p</div>
<div class="t" style="left:687.5px;top:360.6px;">Preview:</div>
<div class="t" style="left:733.8px;top:360.6px;color:#b03c3c;">640x360x32, 29.970p</div>
<div class="t" style="left:980px;top:347.3px;">Frame:</div>
<div class="t" style="left:1026.5px;top:347.3px;">449</div>
<div class="t" style="left:980px;top:360.6px;">Display:</div>
<div class="t" style="left:1026.3px;top:360.6px;color:#b03c3c;">464x261x32</div>
<div style="left:673px;top:372.5px;width:604px;height:20px;background:#b2b0b0;"></div>
<svg style="left:0;top:0" width="1280" height="400"><polygon points="673,373 826,373 835,391.5 683,391.5" fill="#dcdbdc" stroke="#9c9b9c" stroke-width="0.8"/></svg>
<svg style="left:0;top:0" width="1280" height="400"><polygon points="825,372 935,372 927,392 834,392" fill="#f1efef" stroke="#bdbcbd" stroke-width="0.8"/></svg>
<div class="t" style="left:697.5px;top:375.5px;color:#2a2a2a;letter-spacing:-0.250px;">Video Media Generators</div>
<div class="t" style="left:840px;top:375.5px;font-weight:bold;font-size:11.600px;">Video Preview</div>
<div style="left:0px;top:392px;width:1280px;height:1px;background:#d2d0d0;"></div>
<div style="left:0px;top:393px;width:1280px;height:5px;background:#f4f0f0;"></div>
<div style="left:4px;top:398px;width:1274px;height:1px;background:#a2a0a0;"></div>
<div style="left:9px;top:406px;width:3px;height:3px;background:#555;border-radius:1px;"></div>
<div style="left:9px;top:411px;width:3px;height:3px;background:#555;border-radius:1px;"></div>
<div style="left:9px;top:416px;width:3px;height:3px;background:#555;border-radius:1px;"></div>
<div style="left:9px;top:421px;width:3px;height:3px;background:#555;border-radius:1px;"></div>
<div style="left:9px;top:426px;width:3px;height:3px;background:#555;border-radius:1px;"></div>
<div style="left:9px;top:431px;width:3px;height:3px;background:#555;border-radius:1px;"></div>
<div class="t" style="left:114.5px;top:410.8px;font-size:21.500px;line-height:24px;color:#626262;letter-spacing:-0.600px;">00:00:14.29</div>
<div style="left:231px;top:399px;width:1px;height:299px;background:#8c8b8c;"></div>
<div style="left:4px;top:445px;width:221px;height:69px;background:#f3efef;border:1px solid #a8a6a6;border-right-color:#b8b6b6;"></div>
<div style="left:7px;top:449.0px;width:13.5px;height:7.5px;background:linear-gradient(#c8c8e6,#b4b4dc);border:1px solid #a5a5d2;border-radius:2px;"></div>
<div style="left:10px;top:452.0px;width:7.5px;height:1.5px;background:#f0f0fa;"></div>
<div style="left:7px;top:457.5px;width:13.5px;height:7.5px;background:linear-gradient(#c8c8e6,#b4b4dc);border:1px solid #a5a5d2;border-radius:2px;"></div>
<div style="left:10px;top:460.5px;width:7.5px;height:1.5px;background:#f0f0fa;"></div>
<div style="left:24.5px;top:449px;width:24.5px;height:16.5px;background:linear-gradient(#8670b0,#64508c);border-radius:2.500px;"></div>
<div class="t" style="left:24.500px;top:451px;width:22px;text-align:right;color:#f0f0f0;font-size:11px;">8</div>
<svg style="left:72px;top:451px" width="14" height="14" viewBox="0 0 14 14"><circle cx="7" cy="7" r="6" fill="#ececec" stroke="#b4b4b4" stroke-width="1.300"/><circle cx="7" cy="7" r="2.600" fill="#dcdcdc" stroke="#a5a5a5" stroke-width="1.500"/></svg>
<svg style="left:95px;top:451px" width="14" height="14" viewBox="0 0 14 14"><circle cx="7" cy="7" r="5" fill="#d2d7f0" stroke="#96a0c8" stroke-width="1.500"/><path d="M2 12l10-10" stroke="#8c96be" stroke-width="1.600"/></svg>
<svg style="left:119px;top:451.5px" width="16" height="12" viewBox="0 0 16 12"><path d="M0 6h16" stroke="#3ca078" stroke-width="1.600"/><circle cx="2" cy="6" r="2" fill="#3ca078"/><circle cx="14" cy="6" r="2" fill="#3ca078"/><rect x="5.500" y="0.500" width="5" height="11" rx="1.500" fill="#50b48c" stroke="#3ca078" stroke-width="1"/></svg>
<svg style="left:138.5px;top:456px" width="6" height="3.5" viewBox="0 0 6 3.5"><path d="M0 0h6l-3.0 3.0z" fill="#222"/></svg>
<svg style="left:153.7px;top:450.6px" width="14" height="14" viewBox="0 0 14 14"><circle cx="7" cy="7" r="5.600" fill="#f0f0fa" stroke="#8c96dc" stroke-width="1.700"/><path d="M3 3l8 8" stroke="#8c96dc" stroke-width="1.700"/></svg>
<svg style="left:182.7px;top:451.1px" width="4" height="13" viewBox="0 0 4 13"><path d="M0.200 0.500q1.800-1 3.600 0l-0.900 8h-1.800z" fill="#8c8c96"/><circle cx="2" cy="11.200" r="1.600" fill="#8c8c96"/></svg>
<div style="left:198.5px;top:448.7px;width:21.5px;height:3px;background:#e65532;"></div>
<div style="left:198.5px;top:451.7px;width:21.5px;height:2px;background:#f6dcd6;"></div>
<div style="left:198.5px;top:456px;width:21.5px;height:54.5px;background:linear-gradient(#8c8c84,#6e7870 50%,#66706a);border:1px solid #8a8a8a;border-top-color:#aaa;"></div>
<div class="t" style="left:198px;top:462.5px;width:19px;text-align:right;color:#e8e8e8;font-size:9.800px;">6</div>
<div style="left:218px;top:469px;width:2.5px;height:1px;background:#e0e0e0;"></div>
<div class="t" style="left:198px;top:477.0px;width:19px;text-align:right;color:#e8e8e8;font-size:9.800px;">12</div>
<div style="left:218px;top:483.5px;width:2.5px;height:1px;background:#e0e0e0;"></div>
<div class="t" style="left:198px;top:491.5px;width:19px;text-align:right;color:#e8e8e8;font-size:9.800px;">18</div>
<div style="left:218px;top:498px;width:2.5px;height:1px;background:#e0e0e0;"></div>
<div class="t" style="left:14.5px;top:473px;">0.0 dB</div>
<div style="left:64px;top:478.5px;width:50px;height:1.5px;background:#555;"></div>
<div style="left:107px;top:478.8px;width:7.5px;height:1px;background:#aaa;"></div>
<div style="left:88px;top:473.5px;width:19px;height:12.5px;border:1px solid #9a9a9a;border-radius:3px;background:linear-gradient(#f4f4f4,#dcdcdc 55%,#cdcdcd);"></div>
<div style="left:94.0px;top:477.0px;width:1px;height:5.5px;background:#777;"></div>
<div style="left:97.0px;top:477.0px;width:1px;height:5.5px;background:#777;"></div>
<div style="left:100.0px;top:477.0px;width:1px;height:5.5px;background:#777;"></div>
<svg style="left:132px;top:479.5px" width="1" height="1" viewBox="0 0 1 1"><g><rect x="-1.800" y="-7.800" width="3.600" height="4" fill="#7a6060" transform="rotate(0)"/><rect x="-1.800" y="-7.800" width="3.600" height="4" fill="#7a6060" transform="rotate(45)"/><rect x="-1.800" y="-7.800" width="3.600" height="4" fill="#7a6060" transform="rotate(90)"/><rect x="-1.800" y="-7.800" width="3.600" height="4" fill="#7a6060" transform="rotate(135)"/><rect x="-1.800" y="-7.800" width="3.600" height="4" fill="#7a6060" transform="rotate(180)"/><rect x="-1.800" y="-7.800" width="3.600" height="4" fill="#7a6060" transform="rotate(225)"/><rect x="-1.800" y="-7.800" width="3.600" height="4" fill="#7a6060" transform="rotate(270)"/><rect x="-1.800" y="-7.800" width="3.600" height="4" fill="#7a6060" transform="rotate(315)"/><circle r="5" fill="#cd6666" stroke="#7d5050" stroke-width="0.800"/><circle r="2.400" fill="#faeaea"/><circle r="1.100" fill="#b44646"/></g></svg>
<div class="t" style="left:144px;top:473px;">Touch</div>
<svg style="left:186px;top:477.5px" width="6" height="3.5" viewBox="0 0 6 3.5"><path d="M0 0h6l-3.0 3.0z" fill="#222"/></svg>
<div class="t" style="left:13.5px;top:494.5px;">Center</div>
<div style="left:64px;top:500.3px;width:50.5px;height:1px;background:#888;"></div>
<div style="left:83px;top:492.5px;width:12.5px;height:14px;border:1px solid #9a9a9a;border-radius:3px;background:linear-gradient(#f4f4f4,#dcdcdc 55%,#cdcdcd);"></div>
<div style="left:88.75px;top:496.0px;width:1px;height:7px;background:#777;"></div>
<div style="left:4px;top:514px;width:221px;height:64px;background:#b5d3f1;border:1px solid #a8a6a6;border-top:0;border-right-color:#b8b6b6;"></div>
<div style="left:7px;top:517.5px;width:13.5px;height:7.5px;background:linear-gradient(#c8c8e6,#b4b4dc);border:1px solid #a5a5d2;border-radius:2px;"></div>
<div style="left:10px;top:520.5px;width:7.5px;height:1.5px;background:#f0f0fa;"></div>
<div style="left:7px;top:526.0px;width:13.5px;height:7.5px;background:linear-gradient(#c8c8e6,#b4b4dc);border:1px solid #a5a5d2;border-radius:2px;"></div>
<div style="left:10px;top:529.0px;width:7.5px;height:1.5px;background:#f0f0fa;"></div>
<div style="left:24.5px;top:517.5px;width:24.5px;height:16.5px;background:linear-gradient(#78b4be,#5096a0);border-radius:2.500px;"></div>
<div class="t" style="left:24.500px;top:519.5px;width:22px;text-align:right;color:#f0f0f0;font-size:11px;">9</div>
<div style="left:26.5px;top:519.0px;width:3.5px;height:3.5px;background:#f4f4f4;"></div>
<svg style="left:75px;top:519px" width="15" height="15" viewBox="0 0 15 15"><rect x="4.500" y="0.500" width="8" height="8" fill="#dce6e6" stroke="#8c9696"/><rect x="2.500" y="3.500" width="8" height="8" fill="#c8dcd2" stroke="#78968c"/><rect x="0.500" y="6.500" width="8" height="8" fill="#b4e0c8" stroke="#6ea08c"/><path d="M1 1l13 13" stroke="#c85a5a" stroke-width="1.300"/></svg>
<svg style="left:98px;top:519px" width="16" height="15" viewBox="0 0 16 15"><rect x="0.500" y="0.500" width="10" height="9" fill="#fafafa" stroke="#8c8c96"/><rect x="6.500" y="6.500" width="9" height="8" fill="#dcdcfa" stroke="#aaaadc"/><path d="M2 2l4.500 4.500M6.500 3v3.500h-3.500" stroke="#222" stroke-width="1.300" fill="none"/></svg>
<svg style="left:122px;top:520px" width="16" height="12" viewBox="0 0 16 12"><path d="M0 6h16" stroke="#8ca5c3" stroke-width="1.600"/><circle cx="2" cy="6" r="2" fill="#8ca5c3"/><circle cx="14" cy="6" r="2" fill="#8ca5c3"/><rect x="5.500" y="0.500" width="5" height="11" rx="1.500" fill="#a5bedc" stroke="#8ca5c3" stroke-width="1"/></svg>
<svg style="left:153.5px;top:525.5px" width="1" height="1" viewBox="0 0 1 1"><g><rect x="-1.800" y="-7.800" width="3.600" height="4" fill="#7a6060" transform="rotate(0)"/><rect x="-1.800" y="-7.800" width="3.600" height="4" fill="#7a6060" transform="rotate(45)"/><rect x="-1.800" y="-7.800" width="3.600" height="4" fill="#7a6060" transform="rotate(90)"/><rect x="-1.800" y="-7.800" width="3.600" height="4" fill="#7a6060" transform="rotate(135)"/><rect x="-1.800" y="-7.800" width="3.600" height="4" fill="#7a6060" transform="rotate(180)"/><rect x="-1.800" y="-7.800" width="3.600" height="4" fill="#7a6060" transform="rotate(225)"/><rect x="-1.800" y="-7.800" width="3.600" height="4" fill="#7a6060" transform="rotate(270)"/><rect x="-1.800" y="-7.800" width="3.600" height="4" fill="#7a6060" transform="rotate(315)"/><circle r="5" fill="#cd6666" stroke="#7d5050" stroke-width="0.800"/><circle r="2.400" fill="#faeaea"/><circle r="1.100" fill="#b44646"/></g></svg>
<svg style="left:165px;top:524px" width="6" height="3.5" viewBox="0 0 6 3.5"><path d="M0 0h6l-3.0 3.0z" fill="#222"/></svg>
<svg style="left:180px;top:519px" width="14" height="14" viewBox="0 0 14 14"><circle cx="7" cy="7" r="5.600" fill="#f0f0fa" stroke="#8c96dc" stroke-width="1.700"/><path d="M3 3l8 8" stroke="#8c96dc" stroke-width="1.700"/></svg>
<svg style="left:210px;top:519.5px" width="4" height="13" viewBox="0 0 4 13"><path d="M0.200 0.500q1.800-1 3.600 0l-0.900 8h-1.800z" fill="#8c9bbe"/><circle cx="2" cy="11.200" r="1.600" fill="#8c9bbe"/></svg>
<div style="left:34px;top:546.5px;width:101px;height:1.5px;background:#4a5a6a;"></div>
<div style="left:134.5px;top:541.5px;width:18.5px;height:12.5px;border:1px solid #9a9a9a;border-radius:3px;background:linear-gradient(#f4f4f4,#dcdcdc 55%,#cdcdcd);"></div>
<div style="left:140.25px;top:545.0px;width:1px;height:5.5px;background:#777;"></div>
<div style="left:143.25px;top:545.0px;width:1px;height:5.5px;background:#777;"></div>
<div style="left:146.25px;top:545.0px;width:1px;height:5.5px;background:#777;"></div>
<svg style="left:162.5px;top:541px" width="16" height="15" viewBox="0 0 16 15"><rect x="0.500" y="0.500" width="11" height="10" fill="#d2e6dc" stroke="#506450"/><path d="M0.500 2.500h11" stroke="#506450" stroke-width="2" stroke-dasharray="2 1"/><rect x="6.500" y="6.500" width="9" height="8" fill="#beebd2" stroke="#78aa8c"/><text x="11" y="13.500" font-size="8" text-anchor="middle" fill="#1e3c28" font-family="Liberation Sans,sans-serif">α</text></svg>
<svg style="left:184px;top:541.5px" width="13" height="13" viewBox="0 0 13 13"><path d="M6 0l4.500 5h-3v6.500h-3v-6.500h-3z" fill="#a5b9cd"/><path d="M7 12.500h6" stroke="#c8d2dc" stroke-width="1.500"/></svg>
<svg style="left:204px;top:540.5px" width="14" height="15" viewBox="0 0 14 15"><path d="M0 1.500h9" stroke="#d2dcf0" stroke-width="3"/><path d="M9 4.500v4h3l-4.500 5.500l-4.500-5.500h3v-4z" fill="#1e3282"/><path d="M7.500 1.500h3v4" stroke="#8c96b4" stroke-width="1" fill="none"/></svg>
<div style="left:4px;top:578px;width:221px;height:64px;background:#f3efef;border:1px solid #a8a6a6;border-top:0;border-right-color:#b8b6b6;"></div>
<div style="left:7px;top:581.5px;width:13.5px;height:7.5px;background:linear-gradient(#c8c8e6,#b4b4dc);border:1px solid #a5a5d2;border-radius:2px;"></div>
<div style="left:10px;top:584.5px;width:7.5px;height:1.5px;background:#f0f0fa;"></div>
<div style="left:7px;top:590.0px;width:13.5px;height:7.5px;background:linear-gradient(#c8c8e6,#b4b4dc);border:1px solid #a5a5d2;border-radius:2px;"></div>
<div style="left:10px;top:593.0px;width:7.5px;height:1.5px;background:#f0f0fa;"></div>
<div style="left:24.5px;top:581.5px;width:24.5px;height:16.5px;background:linear-gradient(#c36e78,#a04650);border-radius:2.500px;"></div>
<div class="t" style="left:24.500px;top:583.5px;width:22px;text-align:right;color:#f0f0f0;font-size:11px;">10</div>
<svg style="left:75px;top:583px" width="15" height="15" viewBox="0 0 15 15"><rect x="4.500" y="0.500" width="8" height="8" fill="#dce6e6" stroke="#8c9696"/><rect x="2.500" y="3.500" width="8" height="8" fill="#c8dcd2" stroke="#78968c"/><rect x="0.500" y="6.500" width="8" height="8" fill="#b4e0c8" stroke="#6ea08c"/><path d="M1 1l13 13" stroke="#c85a5a" stroke-width="1.300"/></svg>
<svg style="left:98px;top:583px" width="16" height="15" viewBox="0 0 16 15"><rect x="0.500" y="0.500" width="10" height="9" fill="#fafafa" stroke="#8c8c96"/><rect x="6.500" y="6.500" width="9" height="8" fill="#dcdcfa" stroke="#aaaadc"/><path d="M2 2l4.500 4.500M6.500 3v3.500h-3.500" stroke="#222" stroke-width="1.300" fill="none"/></svg>
<svg style="left:122px;top:584px" width="16" height="12" viewBox="0 0 16 12"><path d="M0 6h16" stroke="#8ca5c3" stroke-width="1.600"/><circle cx="2" cy="6" r="2" fill="#8ca5c3"/><circle cx="14" cy="6" r="2" fill="#8ca5c3"/><rect x="5.500" y="0.500" width="5" height="11" rx="1.500" fill="#a5bedc" stroke="#8ca5c3" stroke-width="1"/></svg>
<svg style="left:153.5px;top:589.5px" width="1" height="1" viewBox="0 0 1 1"><g><rect x="-1.800" y="-7.800" width="3.600" height="4" fill="#7a6060" transform="rotate(0)"/><rect x="-1.800" y="-7.800" width="3.600" height="4" fill="#7a6060" transform="rotate(45)"/><rect x="-1.800" y="-7.800" width="3.600" height="4" fill="#7a6060" transform="rotate(90)"/><rect x="-1.800" y="-7.800" width="3.600" height="4" fill="#7a6060" transform="rotate(135)"/><rect x="-1.800" y="-7.800" width="3.600" height="4" fill="#7a6060" transform="rotate(180)"/><rect x="-1.800" y="-7.800" width="3.600" height="4" fill="#7a6060" transform="rotate(225)"/><rect x="-1.800" y="-7.800" width="3.600" height="4" fill="#7a6060" transform="rotate(270)"/><rect x="-1.800" y="-7.800" width="3.600" height="4" fill="#7a6060" transform="rotate(315)"/><circle r="5" fill="#cd6666" stroke="#7d5050" stroke-width="0.800"/><circle r="2.400" fill="#faeaea"/><circle r="1.100" fill="#b44646"/></g></svg>
<svg style="left:165px;top:588px" width="6" height="3.5" viewBox="0 0 6 3.5"><path d="M0 0h6l-3.0 3.0z" fill="#222"/></svg>
<svg style="left:180px;top:583px" width="14" height="14" viewBox="0 0 14 14"><circle cx="7" cy="7" r="5.600" fill="#f0f0fa" stroke="#8c96dc" stroke-width="1.700"/><path d="M3 3l8 8" stroke="#8c96dc" stroke-width="1.700"/></svg>
<svg style="left:210px;top:583.5px" width="4" height="13" viewBox="0 0 4 13"><path d="M0.200 0.500q1.800-1 3.600 0l-0.900 8h-1.800z" fill="#8c9bbe"/><circle cx="2" cy="11.200" r="1.600" fill="#8c9bbe"/></svg>
<div style="left:34px;top:610.5px;width:101px;height:1.5px;background:#4a5a6a;"></div>
<div style="left:134.5px;top:605.5px;width:18.5px;height:12.5px;border:1px solid #9a9a9a;border-radius:3px;background:linear-gradient(#f4f4f4,#dcdcdc 55%,#cdcdcd);"></div>
<div style="left:140.25px;top:609.0px;width:1px;height:5.5px;background:#777;"></div>
<div style="left:143.25px;top:609.0px;width:1px;height:5.5px;background:#777;"></div>
<div style="left:146.25px;top:609.0px;width:1px;height:5.5px;background:#777;"></div>
<svg style="left:162.5px;top:605px" width="16" height="15" viewBox="0 0 16 15"><rect x="0.500" y="0.500" width="11" height="10" fill="#d2e6dc" stroke="#506450"/><path d="M0.500 2.500h11" stroke="#506450" stroke-width="2" stroke-dasharray="2 1"/><rect x="6.500" y="6.500" width="9" height="8" fill="#beebd2" stroke="#78aa8c"/><text x="11" y="13.500" font-size="8" text-anchor="middle" fill="#1e3c28" font-family="Liberation Sans,sans-serif">α</text></svg>
<svg style="left:184px;top:605.5px" width="13" height="13" viewBox="0 0 13 13"><path d="M6 0l4.500 5h-3v6.500h-3v-6.500h-3z" fill="#a5b9cd"/><path d="M7 12.500h6" stroke="#c8d2dc" stroke-width="1.500"/></svg>
<svg style="left:204px;top:604.5px" width="14" height="15" viewBox="0 0 14 15"><path d="M0 1.500h9" stroke="#d2dcf0" stroke-width="3"/><path d="M9 4.500v4h3l-4.500 5.500l-4.500-5.500h3v-4z" fill="#1e3282"/><path d="M7.500 1.500h3v4" stroke="#8c96b4" stroke-width="1" fill="none"/></svg>
<div style="left:4px;top:642px;width:221px;height:11.500px;overflow:hidden;background:#f3efef;border-left:1px solid #a8a6a6;border-right:1px solid #b8b6b6;">
<div style="left:3px;top:3.5px;width:13.5px;height:7.5px;background:#c3c3e6;border:1px solid #a5a5d2;border-radius:2px;"></div>
<div style="left:20.5px;top:3.5px;width:24.5px;height:12px;background:#78b4c8;border-radius:2.500px;"></div>
<div style="left:195px;top:8px;width:22px;height:4px;background:#909090;"></div>
<svg style="left:68px;top:4.500px" width="120" height="10"><circle cx="7" cy="7" r="6" fill="#e6e6e6" stroke="#b4b4b4" stroke-width="1.300"/><circle cx="30" cy="7" r="5" fill="#d2d7f0" stroke="#96a0c8" stroke-width="1.500"/><rect x="52" y="3" width="5" height="8" fill="#50b48c"/><circle cx="88.500" cy="7" r="5.600" fill="#f0f0fa" stroke="#8c96dc" stroke-width="1.700"/><rect x="111" y="1" width="3" height="8" fill="#9a9aa5"/></svg>
</div>
<div class="t" style="left:6px;top:669px;">Rate: 0.00</div>
<div style="left:88px;top:676.5px;width:124px;height:1px;background:#8c8c8c;"></div>
<svg style="left:136px;top:671px" width="27" height="12" viewBox="0 0 27 12"><path d="M0 6l7-6v12zM27 6l-7-6v12z" fill="#8c8c8c"/><path d="M5.500 6l8-6.500l8 6.500l-8 6.500z" fill="#a0a0a0" stroke="#dcdcdc" stroke-width="0.800"/></svg>
<svg style="left:155.5px;top:684px" width="12" height="11" viewBox="0 0 12 11"><path d="M6 0l6 11h-12z" fill="#dc963c"/></svg>
<div style="left:232px;top:428px;width:1028px;height:1px;background:#b4b2b2;"></div>
<div style="left:1260px;top:399px;width:1px;height:47px;background:#b4b2b2;"></div>
<div style="left:386px;top:400px;width:41px;height:11px;background:#ffffe6;border:1px solid #1e1e1e;"></div>
<div class="t" style="left:386px;top:399.5px;font-size:9.500px;line-height:12px;width:41px;text-align:center;color:#222;">-1:03.22</div>
<div style="left:429px;top:400.5px;width:252px;height:7px;background:linear-gradient(rgba(200,225,250,0),rgba(190,220,250,.7) 45%,rgba(190,220,250,.7) 55%,rgba(200,225,250,0));"></div>
<div style="left:431px;top:403px;width:249px;height:2px;background:#4b8cd2;"></div>
<div style="left:430px;top:401px;width:1px;height:6px;background:#4b8cd2;"></div>
<svg style="left:431px;top:401px" width="5" height="6" viewBox="0 0 5 6"><path d="M0 3l5-3v6z" fill="#4b8cd2"/></svg>
<svg style="left:232px;top:420px" width="9" height="8" viewBox="0 0 9 8"><path d="M0 8v-3.500l5-4.500h4l-6 8z" fill="#ebe13c" stroke="#c8be28" stroke-width="0.500"/></svg>
<div style="left:232px;top:445.5px;width:1028px;height:1px;background:#7a7a7a;"></div>
<svg style="left:232px;top:439.5px" width="1028" height="7" viewBox="0 0 1028 7"><rect x="0.0" y="0" width="1" height="6.500" fill="#555"/><rect x="7.9" y="3.500" width="1" height="3" fill="#7a7a7a"/><rect x="15.8" y="3.500" width="1" height="3" fill="#7a7a7a"/><rect x="23.6" y="3.500" width="1" height="3" fill="#7a7a7a"/><rect x="31.5" y="3.500" width="1" height="3" fill="#7a7a7a"/><rect x="39.4" y="3.500" width="1" height="3" fill="#7a7a7a"/><rect x="47.3" y="3.500" width="1" height="3" fill="#7a7a7a"/><rect x="55.2" y="3.500" width="1" height="3" fill="#7a7a7a"/><rect x="63.0" y="3.500" width="1" height="3" fill="#7a7a7a"/><rect x="70.9" y="3.500" width="1" height="3" fill="#7a7a7a"/><rect x="78.8" y="3.500" width="1" height="3" fill="#7a7a7a"/><rect x="86.7" y="3.500" width="1" height="3" fill="#7a7a7a"/><rect x="94.6" y="3.500" width="1" height="3" fill="#7a7a7a"/><rect x="102.4" y="3.500" width="1" height="3" fill="#7a7a7a"/><rect x="110.3" y="3.500" width="1" height="3" fill="#7a7a7a"/><rect x="118.2" y="0" width="1" height="6.500" fill="#555"/><rect x="126.1" y="3.500" width="1" height="3" fill="#7a7a7a"/><rect x="134.0" y="3.500" width="1" height="3" fill="#7a7a7a"/><rect x="141.8" y="3.500" width="1" height="3" fill="#7a7a7a"/><rect x="149.7" y="3.500" width="1" height="3" fill="#7a7a7a"/><rect x="157.6" y="3.500" width="1" height="3" fill="#7a7a7a"/><rect x="165.5" y="3.500" width="1" height="3" fill="#7a7a7a"/><rect x="173.4" y="3.500" width="1" height="3" fill="#7a7a7a"/><rect x="181.2" y="3.500" width="1" height="3" fill="#7a7a7a"/><rect x="189.1" y="3.500" width="1" height="3" fill="#7a7a7a"/><rect x="197.0" y="3.500" width="1" height="3" fill="#7a7a7a"/><rect x="204.9" y="3.500" width="1" height="3" fill="#7a7a7a"/><rect x="212.8" y="3.500" width="1" height="3" fill="#7a7a7a"/><rect x="220.6" y="3.500" width="1" height="3" fill="#7a7a7a"/><rect x="228.5" y="3.500" width="1" height="3" fill="#7a7a7a"/><rect x="236.4" y="0" width="1" height="6.500" fill="#555"/><rect x="244.3" y="3.500" width="1" height="3" fill="#7a7a7a"/><rect x="252.2" y="3.500" width="1" height="3" fill="#7a7a7a"/><rect x="260.0" y="3.500" width="1" height="3" fill="#7a7a7a"/><rect x="267.9" y="3.500" width="1" height="3" fill="#7a7a7a"/><rect x="275.8" y="3.500" width="1" height="3" fill="#7a7a7a"/><rect x="283.7" y="3.500" width="1" height="3" fill="#7a7a7a"/><rect x="291.6" y="3.500" width="1" height="3" fill="#7a7a7a"/><rect x="299.4" y="3.500" width="1" height="3" fill="#7a7a7a"/><rect x="307.3" y="3.500" width="1" height="3" fill="#7a7a7a"/><rect x="315.2" y="3.500" width="1" height="3" fill="#7a7a7a"/><rect x="323.1" y="3.500" width="1" height="3" fill="#7a7a7a"/><rect x="331.0" y="3.500" width="1" height="3" fill="#7a7a7a"/><rect x="338.8" y="3.500" width="1" height="3" fill="#7a7a7a"/><rect x="346.7" y="3.500" width="1" height="3" fill="#7a7a7a"/><rect x="354.6" y="0" width="1" height="6.500" fill="#555"/><rect x="362.5" y="3.500" width="1" height="3" fill="#7a7a7a"/><rect x="370.4" y="3.500" width="1" height="3" fill="#7a7a7a"/><rect x="378.2" y="3.500" width="1" height="3" fill="#7a7a7a"/><rect x="386.1" y="3.500" width="1" height="3" fill="#7a7a7a"/><rect x="394.0" y="3.500" width="1" height="3" fill="#7a7a7a"/><rect x="401.9" y="3.500" width="1" height="3" fill="#7a7a7a"/><rect x="409.8" y="3.500" width="1" height="3" fill="#7a7a7a"/><rect x="417.6" y="3.500" width="1" height="3" fill="#7a7a7a"/><rect x="425.5" y="3.500" width="1" height="3" fill="#7a7a7a"/><rect x="433.4" y="3.500" width="1" height="3" fill="#7a7a7a"/><rect x="441.3" y="3.500" width="1" height="3" fill="#7a7a7a"/><rect x="449.2" y="3.500" width="1" height="3" fill="#7a7a7a"/><rect x="457.0" y="3.500" width="1" height="3" fill="#7a7a7a"/><rect x="464.9" y="3.500" width="1" height="3" fill="#7a7a7a"/><rect x="472.8" y="0" width="1" height="6.500" fill="#555"/><rect x="480.7" y="3.500" width="1" height="3" fill="#7a7a7a"/><rect x="488.6" y="3.500" width="1" height="3" fill="#7a7a7a"/><rect x="496.4" y="3.500" width="1" height="3" fill="#7a7a7a"/><rect x="504.3" y="3.500" width="1" height="3" fill="#7a7a7a"/><rect x="512.2" y="3.500" width="1" height="3" fill="#7a7a7a"/><rect x="520.1" y="3.500" width="1" height="3" fill="#7a7a7a"/><rect x="528.0" y="3.500" width="1" height="3" fill="#7a7a7a"/><rect x="535.8" y="3.500" width="1" height="3" fill="#7a7a7a"/><rect x="543.7" y="3.500" width="1" height="3" fill="#7a7a7a"/><rect x="551.6" y="3.500" width="1" height="3" fill="#7a7a7a"/><rect x="559.5" y="3.500" width="1" height="3" fill="#7a7a7a"/><rect x="567.4" y="3.500" width="1" height="3" fill="#7a7a7a"/><rect x="575.2" y="3.500" width="1" height="3" fill="#7a7a7a"/><rect x="583.1" y="3.500" width="1" height="3" fill="#7a7a7a"/><rect x="591.0" y="0" width="1" height="6.500" fill="#555"/><rect x="598.9" y="3.500" width="1" height="3" fill="#7a7a7a"/><rect x="606.8" y="3.500" width="1" height="3" fill="#7a7a7a"/><rect x="614.6" y="3.500" width="1" height="3" fill="#7a7a7a"/><rect x="622.5" y="3.500" width="1" height="3" fill="#7a7a7a"/><rect x="630.4" y="3.500" width="1" height="3" fill="#7a7a7a"/><rect x="638.3" y="3.500" width="1" height="3" fill="#7a7a7a"/><rect x="646.2" y="3.500" width="1" height="3" fill="#7a7a7a"/><rect x="654.0" y="3.500" width="1" height="3" fill="#7a7a7a"/><rect x="661.9" y="3.500" width="1" height="3" fill="#7a7a7a"/><rect x="669.8" y="3.500" width="1" height="3" fill="#7a7a7a"/><rect x="677.7" y="3.500" width="1" height="3" fill="#7a7a7a"/><rect x="685.6" y="3.500" width="1" height="3" fill="#7a7a7a"/><rect x="693.4" y="3.500" width="1" height="3" fill="#7a7a7a"/><rect x="701.3" y="3.500" width="1" height="3" fill="#7a7a7a"/><rect x="709.2" y="0" width="1" height="6.500" fill="#555"/><rect x="717.1" y="3.500" width="1" height="3" fill="#7a7a7a"/><rect x="725.0" y="3.500" width="1" height="3" fill="#7a7a7a"/><rect x="732.8" y="3.500" width="1" height="3" fill="#7a7a7a"/><rect x="740.7" y="3.500" width="1" height="3" fill="#7a7a7a"/><rect x="748.6" y="3.500" width="1" height="3" fill="#7a7a7a"/><rect x="756.5" y="3.500" width="1" height="3" fill="#7a7a7a"/><rect x="764.4" y="3.500" width="1" height="3" fill="#7a7a7a"/><rect x="772.2" y="3.500" width="1" height="3" fill="#7a7a7a"/><rect x="780.1" y="3.500" width="1" height="3" fill="#7a7a7a"/><rect x="788.0" y="3.500" width="1" height="3" fill="#7a7a7a"/><rect x="795.9" y="3.500" width="1" height="3" fill="#7a7a7a"/><rect x="803.8" y="3.500" width="1" height="3" fill="#7a7a7a"/><rect x="811.6" y="3.500" width="1" height="3" fill="#7a7a7a"/><rect x="819.5" y="3.500" width="1" height="3" fill="#7a7a7a"/><rect x="827.4" y="0" width="1" height="6.500" fill="#555"/><rect x="835.3" y="3.500" width="1" height="3" fill="#7a7a7a"/><rect x="843.2" y="3.500" width="1" height="3" fill="#7a7a7a"/><rect x="851.0" y="3.500" width="1" height="3" fill="#7a7a7a"/><rect x="858.9" y="3.500" width="1" height="3" fill="#7a7a7a"/><rect x="866.8" y="3.500" width="1" height="3" fill="#7a7a7a"/><rect x="874.7" y="3.500" width="1" height="3" fill="#7a7a7a"/><rect x="882.6" y="3.500" width="1" height="3" fill="#7a7a7a"/><rect x="890.4" y="3.500" width="1" height="3" fill="#7a7a7a"/><rect x="898.3" y="3.500" width="1" height="3" fill="#7a7a7a"/><rect x="906.2" y="3.500" width="1" height="3" fill="#7a7a7a"/><rect x="914.1" y="3.500" width="1" height="3" fill="#7a7a7a"/><rect x="922.0" y="3.500" width="1" height="3" fill="#7a7a7a"/><rect x="929.8" y="3.500" width="1" height="3" fill="#7a7a7a"/><rect x="937.7" y="3.500" width="1" height="3" fill="#7a7a7a"/><rect x="945.6" y="0" width="1" height="6.500" fill="#555"/><rect x="953.5" y="3.500" width="1" height="3" fill="#7a7a7a"/><rect x="961.4" y="3.500" width="1" height="3" fill="#7a7a7a"/><rect x="969.2" y="3.500" width="1" height="3" fill="#7a7a7a"/><rect x="977.1" y="3.500" width="1" height="3" fill="#7a7a7a"/><rect x="985.0" y="3.500" width="1" height="3" fill="#7a7a7a"/><rect x="992.9" y="3.500" width="1" height="3" fill="#7a7a7a"/><rect x="1000.8" y="3.500" width="1" height="3" fill="#7a7a7a"/><rect x="1008.6" y="3.500" width="1" height="3" fill="#7a7a7a"/><rect x="1016.5" y="3.500" width="1" height="3" fill="#7a7a7a"/><rect x="1024.4" y="3.500" width="1" height="3" fill="#7a7a7a"/></svg>
<div class="t" style="left:234.5px;top:431.5px;font-size:9.500px;line-height:12px;color:#2d2d2d;letter-spacing:-0.100px;">00:00:00</div>
<div class="t" style="left:352.7px;top:431.5px;font-size:9.500px;line-height:12px;color:#2d2d2d;letter-spacing:-0.100px;">00:00:30</div>
<div class="t" style="left:470.9px;top:431.5px;font-size:9.500px;line-height:12px;color:#2d2d2d;letter-spacing:-0.100px;">00:01:00</div>
<div class="t" style="left:589.1px;top:431.5px;font-size:9.500px;line-height:12px;color:#2d2d2d;letter-spacing:-0.100px;">00:01:30</div>
<div class="t" style="left:707.3px;top:431.5px;font-size:9.500px;line-height:12px;color:#2d2d2d;letter-spacing:-0.100px;">00:02:00</div>
<div class="t" style="left:825.5px;top:431.5px;font-size:9.500px;line-height:12px;color:#2d2d2d;letter-spacing:-0.100px;">00:02:30</div>
<div class="t" style="left:943.7px;top:431.5px;font-size:9.500px;line-height:12px;color:#2d2d2d;letter-spacing:-0.100px;">00:03:00</div>
<div class="t" style="left:1061.9px;top:431.5px;font-size:9.500px;line-height:12px;color:#2d2d2d;letter-spacing:-0.100px;">00:03:30</div>
<div class="t" style="left:1180.1px;top:431.5px;font-size:9.500px;line-height:12px;color:#2d2d2d;letter-spacing:-0.100px;">00:04:00</div>
<div style="left:232px;top:447px;width:1px;height:206px;background:repeating-linear-gradient(#6a6a6a 0,#6a6a6a 1.300px,transparent 1.300px,transparent 4px);"></div>
<div style="left:350px;top:447px;width:1px;height:206px;background:repeating-linear-gradient(#6a6a6a 0,#6a6a6a 1.300px,transparent 1.300px,transparent 4px);"></div>
<div style="left:468px;top:447px;width:1px;height:206px;background:repeating-linear-gradient(#6a6a6a 0,#6a6a6a 1.300px,transparent 1.300px,transparent 4px);"></div>
<div style="left:587px;top:447px;width:1px;height:206px;background:repeating-linear-gradient(#6a6a6a 0,#6a6a6a 1.300px,transparent 1.300px,transparent 4px);"></div>
<div style="left:705px;top:447px;width:1px;height:206px;background:repeating-linear-gradient(#6a6a6a 0,#6a6a6a 1.300px,transparent 1.300px,transparent 4px);"></div>
<div style="left:823px;top:447px;width:1px;height:206px;background:repeating-linear-gradient(#6a6a6a 0,#6a6a6a 1.300px,transparent 1.300px,transparent 4px);"></div>
<div style="left:941px;top:447px;width:1px;height:206px;background:repeating-linear-gradient(#6a6a6a 0,#6a6a6a 1.300px,transparent 1.300px,transparent 4px);"></div>
<div style="left:1059px;top:447px;width:1px;height:206px;background:repeating-linear-gradient(#6a6a6a 0,#6a6a6a 1.300px,transparent 1.300px,transparent 4px);"></div>
<div style="left:1178px;top:447px;width:1px;height:206px;background:repeating-linear-gradient(#6a6a6a 0,#6a6a6a 1.300px,transparent 1.300px,transparent 4px);"></div>
<div style="left:232px;top:513px;width:1028px;height:1px;background:#8e8e8e;"></div>
<div style="left:232px;top:577px;width:1028px;height:1px;background:#8e8e8e;"></div>
<div style="left:232px;top:641px;width:1028px;height:1px;background:#8e8e8e;"></div>
<div style="left:436.0px;top:448px;width:113.5px;height:63px;background:#66528e;border:1px solid #3c3058;"></div>
<svg style="left:436.5px;top:448px" width="112.5" height="63" viewBox="0 0 112.5 63"><g fill="#f2ebf8"><rect x="1" y="1" width="1.050" height="7.2"/><rect x="1" y="25.4" width="1.050" height="5.6"/><rect x="2" y="1" width="1.050" height="7.4"/><rect x="2" y="29.3" width="1.050" height="1.7"/><rect x="3" y="1" width="1.050" height="13.3"/><rect x="3" y="29.9" width="1.050" height="1.1"/><rect x="4" y="1" width="1.050" height="9.1"/><rect x="4" y="29.7" width="1.050" height="1.3"/><rect x="5" y="22.0" width="1.050" height="9.0"/><rect x="6" y="1" width="1.050" height="10.0"/><rect x="6" y="17.9" width="1.050" height="13.1"/><rect x="7" y="1" width="1.050" height="11.0"/><rect x="7" y="20.7" width="1.050" height="10.3"/><rect x="8" y="1" width="1.050" height="8.5"/><rect x="8" y="23.8" width="1.050" height="7.2"/><rect x="9" y="1" width="1.050" height="8.3"/><rect x="9" y="20.9" width="1.050" height="10.1"/><rect x="10" y="1" width="1.050" height="13.8"/><rect x="10" y="20.5" width="1.050" height="10.5"/><rect x="11" y="1" width="1.050" height="13.8"/><rect x="11" y="29.6" width="1.050" height="1.4"/><rect x="12" y="20.1" width="1.050" height="10.9"/><rect x="13" y="1" width="1.050" height="6.0"/><rect x="13" y="21.3" width="1.050" height="9.7"/><rect x="14" y="1" width="1.050" height="5.7"/><rect x="14" y="21.4" width="1.050" height="9.6"/><rect x="15" y="1" width="1.050" height="13.8"/><rect x="15" y="18.8" width="1.050" height="12.2"/><rect x="16" y="1" width="1.050" height="13.0"/><rect x="16" y="21.5" width="1.050" height="9.5"/><rect x="17" y="1" width="1.050" height="6.0"/><rect x="17" y="21.0" width="1.050" height="10.0"/><rect x="18" y="1" width="1.050" height="13.8"/><rect x="18" y="23.2" width="1.050" height="7.8"/><rect x="19" y="1" width="1.050" height="8.0"/><rect x="19" y="17.7" width="1.050" height="13.3"/><rect x="20" y="1" width="1.050" height="6.3"/><rect x="20" y="17.7" width="1.050" height="13.3"/><rect x="21" y="1" width="1.050" height="0.7"/><rect x="21" y="30.0" width="1.050" height="1.0"/><rect x="22" y="1" width="1.050" height="1.1"/><rect x="22" y="24.2" width="1.050" height="6.8"/><rect x="23" y="1" width="1.050" height="5.1"/><rect x="23" y="24.4" width="1.050" height="6.6"/><rect x="24" y="1" width="1.050" height="0.8"/><rect x="24" y="30.4" width="1.050" height="0.6"/><rect x="25" y="1" width="1.050" height="7.8"/><rect x="25" y="22.3" width="1.050" height="8.7"/><rect x="26" y="1" width="1.050" height="7.2"/><rect x="27" y="25.8" width="1.050" height="5.2"/><rect x="28" y="1" width="1.050" height="1.3"/><rect x="28" y="20.7" width="1.050" height="10.3"/><rect x="29" y="1" width="1.050" height="8.7"/><rect x="30" y="1" width="1.050" height="1.2"/><rect x="30" y="30.6" width="1.050" height="0.4"/><rect x="31" y="1" width="1.050" height="8.1"/><rect x="31" y="30.6" width="1.050" height="0.4"/><rect x="32" y="1" width="1.050" height="0.5"/><rect x="32" y="24.8" width="1.050" height="6.2"/><rect x="33" y="17.3" width="1.050" height="13.7"/><rect x="34" y="1" width="1.050" height="13.1"/><rect x="34" y="23.2" width="1.050" height="7.8"/><rect x="35" y="1" width="1.050" height="5.4"/><rect x="36" y="1" width="1.050" height="1.1"/><rect x="37" y="1" width="1.050" height="12.5"/><rect x="37" y="26.9" width="1.050" height="4.1"/><rect x="38" y="1" width="1.050" height="0.4"/><rect x="38" y="25.3" width="1.050" height="5.7"/><rect x="39" y="1" width="1.050" height="5.4"/><rect x="39" y="20.8" width="1.050" height="10.2"/><rect x="40" y="22.3" width="1.050" height="8.7"/><rect x="41" y="1" width="1.050" height="11.5"/><rect x="41" y="30.2" width="1.050" height="0.8"/><rect x="42" y="25.5" width="1.050" height="5.5"/><rect x="43" y="1" width="1.050" height="3.9"/><rect x="43" y="26.8" width="1.050" height="4.2"/><rect x="44" y="1" width="1.050" height="2.8"/><rect x="44" y="22.9" width="1.050" height="8.1"/><rect x="45" y="25.0" width="1.050" height="6.0"/><rect x="46" y="1" width="1.050" height="0.4"/><rect x="46" y="25.4" width="1.050" height="5.6"/><rect x="47" y="1" width="1.050" height="4.0"/><rect x="47" y="26.3" width="1.050" height="4.7"/><rect x="48" y="1" width="1.050" height="5.1"/><rect x="48" y="25.8" width="1.050" height="5.2"/><rect x="49" y="1" width="1.050" height="6.1"/><rect x="49" y="25.7" width="1.050" height="5.3"/><rect x="50" y="1" width="1.050" height="6.0"/><rect x="50" y="26.4" width="1.050" height="4.6"/><rect x="51" y="1" width="1.050" height="10.6"/><rect x="51" y="21.0" width="1.050" height="10.0"/><rect x="52" y="1" width="1.050" height="3.8"/><rect x="52" y="24.7" width="1.050" height="6.3"/><rect x="53" y="1" width="1.050" height="5.6"/><rect x="53" y="30.4" width="1.050" height="0.6"/><rect x="54" y="1" width="1.050" height="4.2"/><rect x="55" y="1" width="1.050" height="4.5"/><rect x="56" y="1" width="1.050" height="0.8"/><rect x="56" y="22.2" width="1.050" height="8.8"/><rect x="57" y="1" width="1.050" height="2.8"/><rect x="57" y="26.4" width="1.050" height="4.6"/><rect x="58" y="1" width="1.050" height="2.8"/><rect x="59" y="1" width="1.050" height="5.4"/><rect x="60" y="1" width="1.050" height="3.1"/><rect x="60" y="28.0" width="1.050" height="3.0"/><rect x="61" y="27.4" width="1.050" height="3.6"/><rect x="62" y="28.1" width="1.050" height="2.9"/><rect x="63" y="1" width="1.050" height="3.3"/><rect x="63" y="28.9" width="1.050" height="2.1"/><rect x="64" y="1" width="1.050" height="4.2"/><rect x="64" y="29.1" width="1.050" height="1.9"/><rect x="66" y="27.4" width="1.050" height="3.6"/><rect x="67" y="29.6" width="1.050" height="1.4"/><rect x="68" y="29.4" width="1.050" height="1.6"/><rect x="69" y="1" width="1.050" height="1.5"/><rect x="69" y="28.2" width="1.050" height="2.8"/><rect x="70" y="1" width="1.050" height="1.8"/><rect x="70" y="29.1" width="1.050" height="1.9"/><rect x="71" y="29.2" width="1.050" height="1.8"/><rect x="73" y="1" width="1.050" height="2.1"/><rect x="75" y="1" width="1.050" height="0.9"/><rect x="75" y="29.6" width="1.050" height="1.4"/><rect x="76" y="1" width="1.050" height="1.9"/><rect x="76" y="29.9" width="1.050" height="1.1"/><rect x="77" y="1" width="1.050" height="1.2"/><rect x="77" y="28.8" width="1.050" height="2.2"/><rect x="78" y="1" width="1.050" height="2.0"/><rect x="79" y="1" width="1.050" height="2.8"/><rect x="79" y="27.6" width="1.050" height="3.4"/><rect x="80" y="28.8" width="1.050" height="2.2"/><rect x="81" y="30.6" width="1.050" height="0.4"/><rect x="82" y="1" width="1.050" height="0.5"/><rect x="83" y="1" width="1.050" height="2.7"/><rect x="83" y="28.7" width="1.050" height="2.3"/><rect x="84" y="1" width="1.050" height="2.0"/><rect x="84" y="28.1" width="1.050" height="2.9"/><rect x="85" y="26.8" width="1.050" height="4.2"/><rect x="86" y="1" width="1.050" height="0.6"/><rect x="87" y="1" width="1.050" height="3.3"/><rect x="88" y="1" width="1.050" height="2.4"/><rect x="88" y="27.9" width="1.050" height="3.1"/><rect x="89" y="1" width="1.050" height="4.8"/><rect x="89" y="26.6" width="1.050" height="4.4"/><rect x="90" y="1" width="1.050" height="4.1"/><rect x="90" y="26.4" width="1.050" height="4.6"/><rect x="91" y="1" width="1.050" height="0.8"/><rect x="91" y="26.3" width="1.050" height="4.7"/><rect x="92" y="1" width="1.050" height="8.0"/><rect x="92" y="25.7" width="1.050" height="5.3"/><rect x="93" y="1" width="1.050" height="4.5"/><rect x="93" y="25.5" width="1.050" height="5.5"/><rect x="94" y="1" width="1.050" height="0.9"/><rect x="94" y="25.5" width="1.050" height="5.5"/><rect x="95" y="1" width="1.050" height="0.7"/><rect x="95" y="26.1" width="1.050" height="4.9"/><rect x="96" y="1" width="1.050" height="6.1"/><rect x="96" y="22.6" width="1.050" height="8.4"/><rect x="97" y="1" width="1.050" height="4.2"/><rect x="98" y="1" width="1.050" height="9.8"/><rect x="98" y="26.3" width="1.050" height="4.7"/><rect x="99" y="1" width="1.050" height="8.2"/><rect x="99" y="25.3" width="1.050" height="5.7"/><rect x="100" y="1" width="1.050" height="13.1"/><rect x="100" y="24.5" width="1.050" height="6.5"/><rect x="101" y="1" width="1.050" height="9.4"/><rect x="101" y="26.0" width="1.050" height="5.0"/><rect x="102" y="1" width="1.050" height="8.4"/><rect x="102" y="24.5" width="1.050" height="6.5"/><rect x="103" y="1" width="1.050" height="0.7"/><rect x="103" y="25.5" width="1.050" height="5.5"/><rect x="104" y="1" width="1.050" height="6.4"/><rect x="104" y="23.5" width="1.050" height="7.5"/><rect x="105" y="30.3" width="1.050" height="0.7"/></g><g fill="#f2ebf8"><rect x="1" y="32" width="1.050" height="9.2"/><rect x="1" y="51.7" width="1.050" height="9.9"/><rect x="2" y="32" width="1.050" height="8.2"/><rect x="2" y="51.8" width="1.050" height="9.8"/><rect x="3" y="32" width="1.050" height="7.3"/><rect x="3" y="53.5" width="1.050" height="8.1"/><rect x="4" y="32" width="1.050" height="5.7"/><rect x="4" y="48.0" width="1.050" height="13.6"/><rect x="5" y="32" width="1.050" height="5.8"/><rect x="5" y="48.7" width="1.050" height="12.9"/><rect x="6" y="32" width="1.050" height="4.1"/><rect x="7" y="32" width="1.050" height="12.0"/><rect x="7" y="53.0" width="1.050" height="8.6"/><rect x="8" y="32" width="1.050" height="13.6"/><rect x="8" y="49.5" width="1.050" height="12.1"/><rect x="9" y="51.7" width="1.050" height="9.9"/><rect x="10" y="32" width="1.050" height="1.2"/><rect x="10" y="60.2" width="1.050" height="1.4"/><rect x="11" y="32" width="1.050" height="0.8"/><rect x="11" y="59.9" width="1.050" height="1.7"/><rect x="12" y="32" width="1.050" height="0.8"/><rect x="12" y="60.3" width="1.050" height="1.3"/><rect x="13" y="32" width="1.050" height="5.2"/><rect x="13" y="60.6" width="1.050" height="1.0"/><rect x="14" y="32" width="1.050" height="1.3"/><rect x="14" y="49.3" width="1.050" height="12.3"/><rect x="15" y="32" width="1.050" height="9.1"/><rect x="15" y="49.3" width="1.050" height="12.3"/><rect x="16" y="32" width="1.050" height="10.4"/><rect x="16" y="61.0" width="1.050" height="0.6"/><rect x="17" y="32" width="1.050" height="12.2"/><rect x="17" y="54.9" width="1.050" height="6.7"/><rect x="18" y="55.1" width="1.050" height="6.5"/><rect x="19" y="54.5" width="1.050" height="7.1"/><rect x="20" y="32" width="1.050" height="9.2"/><rect x="20" y="56.3" width="1.050" height="5.3"/><rect x="21" y="32" width="1.050" height="0.8"/><rect x="21" y="60.4" width="1.050" height="1.2"/><rect x="22" y="32" width="1.050" height="8.9"/><rect x="22" y="60.5" width="1.050" height="1.1"/><rect x="23" y="32" width="1.050" height="9.2"/><rect x="23" y="51.8" width="1.050" height="9.8"/><rect x="24" y="32" width="1.050" height="12.3"/><rect x="24" y="54.4" width="1.050" height="7.2"/><rect x="25" y="32" width="1.050" height="5.5"/><rect x="25" y="48.0" width="1.050" height="13.6"/><rect x="26" y="32" width="1.050" height="6.4"/><rect x="26" y="50.6" width="1.050" height="11.0"/><rect x="27" y="32" width="1.050" height="11.4"/><rect x="27" y="53.6" width="1.050" height="8.0"/><rect x="28" y="32" width="1.050" height="6.3"/><rect x="28" y="60.9" width="1.050" height="0.7"/><rect x="29" y="32" width="1.050" height="5.9"/><rect x="29" y="54.4" width="1.050" height="7.2"/><rect x="30" y="32" width="1.050" height="5.4"/><rect x="30" y="55.0" width="1.050" height="6.6"/><rect x="31" y="32" width="1.050" height="7.9"/><rect x="31" y="53.9" width="1.050" height="7.7"/><rect x="32" y="32" width="1.050" height="1.2"/><rect x="32" y="53.0" width="1.050" height="8.6"/><rect x="33" y="32" width="1.050" height="6.5"/><rect x="33" y="52.7" width="1.050" height="8.9"/><rect x="34" y="32" width="1.050" height="7.1"/><rect x="34" y="56.7" width="1.050" height="4.9"/><rect x="35" y="32" width="1.050" height="6.9"/><rect x="35" y="54.2" width="1.050" height="7.4"/><rect x="36" y="32" width="1.050" height="4.2"/><rect x="36" y="55.2" width="1.050" height="6.4"/><rect x="37" y="32" width="1.050" height="0.9"/><rect x="37" y="61.0" width="1.050" height="0.6"/><rect x="39" y="55.3" width="1.050" height="6.3"/><rect x="40" y="32" width="1.050" height="7.8"/><rect x="40" y="61.1" width="1.050" height="0.5"/><rect x="41" y="32" width="1.050" height="8.1"/><rect x="41" y="60.8" width="1.050" height="0.8"/><rect x="42" y="32" width="1.050" height="7.4"/><rect x="42" y="54.1" width="1.050" height="7.5"/><rect x="43" y="32" width="1.050" height="6.9"/><rect x="43" y="57.2" width="1.050" height="4.4"/><rect x="44" y="32" width="1.050" height="7.4"/><rect x="44" y="56.5" width="1.050" height="5.1"/><rect x="45" y="57.3" width="1.050" height="4.3"/><rect x="46" y="32" width="1.050" height="9.1"/><rect x="47" y="32" width="1.050" height="7.2"/><rect x="47" y="57.0" width="1.050" height="4.6"/><rect x="48" y="32" width="1.050" height="5.1"/><rect x="48" y="52.3" width="1.050" height="9.3"/><rect x="49" y="32" width="1.050" height="4.0"/><rect x="49" y="57.0" width="1.050" height="4.6"/><rect x="50" y="32" width="1.050" height="7.0"/><rect x="50" y="60.5" width="1.050" height="1.1"/><rect x="51" y="60.4" width="1.050" height="1.2"/><rect x="52" y="32" width="1.050" height="4.9"/><rect x="52" y="55.9" width="1.050" height="5.7"/><rect x="53" y="32" width="1.050" height="4.9"/><rect x="53" y="57.3" width="1.050" height="4.3"/><rect x="54" y="32" width="1.050" height="4.5"/><rect x="54" y="56.7" width="1.050" height="4.9"/><rect x="55" y="32" width="1.050" height="3.6"/><rect x="55" y="52.7" width="1.050" height="8.9"/><rect x="56" y="32" width="1.050" height="0.7"/><rect x="56" y="56.8" width="1.050" height="4.8"/><rect x="57" y="32" width="1.050" height="5.1"/><rect x="57" y="56.7" width="1.050" height="4.9"/><rect x="58" y="32" width="1.050" height="0.7"/><rect x="58" y="56.5" width="1.050" height="5.1"/><rect x="59" y="32" width="1.050" height="3.0"/><rect x="59" y="56.5" width="1.050" height="5.1"/><rect x="60" y="32" width="1.050" height="3.3"/><rect x="60" y="61.2" width="1.050" height="0.4"/><rect x="61" y="58.2" width="1.050" height="3.4"/><rect x="62" y="56.3" width="1.050" height="5.3"/><rect x="63" y="58.2" width="1.050" height="3.4"/><rect x="66" y="59.1" width="1.050" height="2.5"/><rect x="67" y="59.8" width="1.050" height="1.8"/><rect x="68" y="32" width="1.050" height="1.2"/><rect x="69" y="32" width="1.050" height="2.8"/><rect x="70" y="32" width="1.050" height="1.5"/><rect x="71" y="32" width="1.050" height="1.1"/><rect x="71" y="60.6" width="1.050" height="1.0"/><rect x="74" y="60.5" width="1.050" height="1.1"/><rect x="75" y="59.6" width="1.050" height="2.0"/><rect x="76" y="60.3" width="1.050" height="1.3"/><rect x="77" y="59.0" width="1.050" height="2.6"/><rect x="78" y="32" width="1.050" height="1.8"/><rect x="78" y="60.0" width="1.050" height="1.6"/><rect x="79" y="32" width="1.050" height="1.3"/><rect x="80" y="32" width="1.050" height="1.3"/><rect x="80" y="58.0" width="1.050" height="3.6"/><rect x="81" y="32" width="1.050" height="1.6"/><rect x="81" y="58.9" width="1.050" height="2.7"/><rect x="82" y="32" width="1.050" height="3.0"/><rect x="82" y="59.4" width="1.050" height="2.2"/><rect x="83" y="59.8" width="1.050" height="1.8"/><rect x="84" y="32" width="1.050" height="3.6"/><rect x="84" y="58.8" width="1.050" height="2.8"/><rect x="85" y="32" width="1.050" height="0.5"/><rect x="85" y="58.1" width="1.050" height="3.5"/><rect x="86" y="58.8" width="1.050" height="2.8"/><rect x="87" y="58.5" width="1.050" height="3.1"/><rect x="88" y="32" width="1.050" height="0.6"/><rect x="89" y="32" width="1.050" height="7.5"/><rect x="89" y="56.1" width="1.050" height="5.5"/><rect x="90" y="32" width="1.050" height="7.6"/><rect x="90" y="61.1" width="1.050" height="0.5"/><rect x="91" y="32" width="1.050" height="4.1"/><rect x="92" y="32" width="1.050" height="6.2"/><rect x="93" y="32" width="1.050" height="5.4"/><rect x="95" y="57.6" width="1.050" height="4.0"/><rect x="96" y="32" width="1.050" height="0.7"/><rect x="96" y="54.5" width="1.050" height="7.1"/><rect x="97" y="32" width="1.050" height="0.7"/><rect x="97" y="56.2" width="1.050" height="5.4"/><rect x="98" y="32" width="1.050" height="7.8"/><rect x="98" y="54.1" width="1.050" height="7.5"/><rect x="99" y="32" width="1.050" height="0.4"/><rect x="99" y="54.1" width="1.050" height="7.5"/><rect x="100" y="55.6" width="1.050" height="6.0"/><rect x="102" y="56.7" width="1.050" height="4.9"/><rect x="103" y="32" width="1.050" height="1.1"/><rect x="103" y="49.0" width="1.050" height="12.6"/><rect x="104" y="32" width="1.050" height="6.7"/><rect x="104" y="52.5" width="1.050" height="9.1"/><rect x="105" y="32" width="1.050" height="6.0"/><rect x="105" y="56.3" width="1.050" height="5.3"/><rect x="106" y="32" width="1.050" height="4.6"/><rect x="106" y="55.5" width="1.050" height="6.1"/><rect x="107" y="32" width="1.050" height="4.6"/></g><rect x="0" y="31" width="112.5" height="1" fill="#2d2540"/></svg>
<svg style="left:436.0px;top:448px" width="5" height="5" viewBox="0 0 5 5"><path d="M0 0h5l-5 5z" fill="#2832b4"/></svg>
<svg style="left:544.5px;top:448px" width="5" height="5" viewBox="0 0 5 5"><path d="M0 0h5v5z" fill="#46c8dc"/></svg>
<svg style="left:437.0px;top:504px" width="6" height="6" viewBox="0 0 6 6"><path d="M0 0l6 6h-6z" fill="#fafafa" stroke="#222" stroke-width="0.800"/></svg>
<svg style="left:529.5px;top:488px" width="15" height="12" viewBox="0 0 15 12"><g fill="#f2f2f2" stroke="#f2f2f2" stroke-width="1.500" stroke-linejoin="round"><rect x="1.500" y="4.7" width="12" height="2.600" rx="1.300"/><circle cx="2.600" cy="6.0" r="1.900"/><circle cx="12.4" cy="6.0" r="1.900"/><rect x="5.1" y="1.200" width="4.800" height="9.6" rx="1.600"/></g><g fill="#a8a8b0"><rect x="1.500" y="4.7" width="12" height="2.600" rx="1.300"/><circle cx="2.600" cy="6.0" r="1.900"/><circle cx="12.4" cy="6.0" r="1.900"/><rect x="5.1" y="1.200" width="4.800" height="9.6" rx="1.600"/></g></svg>
<div style="left:232px;top:515px;width:198px;height:1px;background:#dfe9ee;"></div>
<div style="left:232px;top:516px;width:198px;height:60px;background:#5f8b9b;border-bottom:1px solid #3a4a50;border-right:1px solid #46606a;"></div>
<div style="left:232px;top:516px;width:197px;height:2.5px;background:#50727f;"></div>
<div style="left:331px;top:518.5px;width:98px;height:55px;background-color:#bab9ba;background-image:linear-gradient(45deg,#9d9c9d 25%,transparent 25%,transparent 75%,#9d9c9d 75%),linear-gradient(45deg,#9d9c9d 25%,transparent 25%,transparent 75%,#9d9c9d 75%);background-size:16px 16px;background-position:0 0,8px 8px;opacity:.96;"></div>
<svg style="left:266.8px;top:515px" width="9" height="5" viewBox="0 0 9 5"><path d="M0 0h9l-4.500 4.500z" fill="#e8eef0"/></svg>
<svg style="left:306.5px;top:515px" width="9" height="5" viewBox="0 0 9 5"><path d="M0 0h9l-4.500 4.500z" fill="#e8eef0"/></svg>
<svg style="left:345.8px;top:515px" width="9" height="5" viewBox="0 0 9 5"><path d="M0 0h9l-4.500 4.500z" fill="#e8eef0"/></svg>
<svg style="left:386.1px;top:515px" width="9" height="5" viewBox="0 0 9 5"><path d="M0 0h9l-4.500 4.500z" fill="#e8eef0"/></svg>
<svg style="left:232px;top:516px" width="6" height="6" viewBox="0 0 6 6"><path d="M0 0h6l-6 6z" fill="#283cc8"/></svg>
<svg style="left:232px;top:569px" width="7" height="7" viewBox="0 0 7 7"><path d="M0 0l6.500 6.500h-6.500z" fill="#f4f4f4" stroke="#222" stroke-width="0.800"/></svg>
<svg style="left:424px;top:516px" width="6" height="6" viewBox="0 0 6 6"><path d="M0 0h6v6z" fill="#b478b4"/></svg>
<svg style="left:412px;top:518px" width="13" height="9" viewBox="0 0 13 9"><rect x="0.500" y="0.500" width="12" height="8" rx="1" fill="#8cc88c" stroke="#3c5a3c"/><path d="M1 2h11M1 7h11" stroke="#284628" stroke-width="1.400" stroke-dasharray="1.500 1"/></svg>
<svg style="left:414px;top:526px" width="42" height="22" viewBox="0 0 42 22"><rect x="3.500" y="2.500" width="11" height="12" fill="#e4e4e4" stroke="#c8c8c8" stroke-width="0.800" opacity=".85"/><path d="M1.500 0.500v15.500h7.500v4" stroke="#3c3c3c" stroke-width="1.300" fill="none"/><path d="M6.500 17.500l2.500 3l2.500-3" stroke="#f0f0f0" stroke-width="1.300" fill="none"/><path d="M5.500 8.700h14M5.500 8.700l3-2.500M5.500 8.700l3 2.500M19.500 8.700l-3-2.500M19.500 8.700l-3 2.500" stroke="#3c3c3c" stroke-width="1.300" fill="none"/><rect x="20.500" y="2.500" width="12" height="14" fill="#ebe7e7" stroke="#c6c4c4"/><path d="M24.500 9.500h14M24.500 9.500l3-2.300M24.500 9.500l3 2.300M38.500 9.500l-3-2.300M38.500 9.500l-3 2.300" stroke="#a5a5a5" stroke-width="1.200" fill="none"/></svg>
<svg style="left:410.5px;top:552px" width="15.5" height="12" viewBox="0 0 15.5 12"><g fill="#f0f0f0" stroke="#f0f0f0" stroke-width="1.500" stroke-linejoin="round"><rect x="1.500" y="4.7" width="12.5" height="2.600" rx="1.300"/><circle cx="2.600" cy="6.0" r="1.900"/><circle cx="12.9" cy="6.0" r="1.900"/><rect x="5.3" y="1.200" width="4.800" height="9.6" rx="1.600"/></g><g fill="#a5a5ad"><rect x="1.500" y="4.7" width="12.5" height="2.600" rx="1.300"/><circle cx="2.600" cy="6.0" r="1.900"/><circle cx="12.9" cy="6.0" r="1.900"/><rect x="5.3" y="1.200" width="4.800" height="9.6" rx="1.600"/></g></svg>
<div style="left:396px;top:568.5px;width:29px;height:3.5px;background:repeating-linear-gradient(90deg,rgba(255,255,255,.55) 0,rgba(255,255,255,.55) 2px,transparent 2px,transparent 3.200px);"></div>
<div style="left:428.7px;top:498px;width:1.2px;height:48px;background:linear-gradient(rgba(200,120,60,0),rgba(200,120,60,.9) 20%,rgba(190,100,50,.9) 48%,rgba(190,110,60,.25) 55%,rgba(190,110,60,0));"></div>
<div style="left:232px;top:580px;width:448.5px;height:60px;background:#fbfafa;border:1px solid #555;border-top-color:#666;border-bottom:1.500px solid #2a2a2a;border-right-color:#444;"></div>
<svg style="left:233px;top:583px;overflow:hidden" width="98" height="54" viewBox="0 0 98 54" preserveAspectRatio="none"><defs><filter id="bla" x="-5%" y="-5%" width="110%" height="110%"><feGaussianBlur stdDeviation="1"/></filter>
<linearGradient id="flra" x1="0" y1="0" x2="1" y2="0"><stop offset="0" stop-color="#6c645a"/><stop offset="0.35" stop-color="#8d7f6a"/><stop offset="1" stop-color="#8f826d"/></linearGradient>
<linearGradient id="cela" x1="0" y1="0" x2="0" y2="1"><stop offset="0" stop-color="#484842"/><stop offset="0.42" stop-color="#55554d"/><stop offset="0.56" stop-color="#7f7f75"/><stop offset="1" stop-color="#8e8e84"/></linearGradient>
<pattern id="spka" width="3" height="3" patternUnits="userSpaceOnUse"><rect width="1.500" height="1.500" fill="#5a4e3c" opacity=".22"/><rect x="1.500" y="1.500" width="1.500" height="1.500" fill="#b4a082" opacity=".2"/></pattern></defs>
<g filter="url(#bla)"><rect x="-2" y="-2" width="102" height="30" fill="url(#cela)"/><rect x="-2" y="25" width="102" height="32" fill="url(#flra)"/><rect x="30" y="27" width="70" height="28" fill="url(#spka)"/>
<path d="M-2 56v-16l30 4l12 12z" fill="#544e48"/><rect x="4" y="4" width="34" height="40" fill="#fff" opacity=".22"/>
<rect x="40" y="17" width="34" height="9" fill="#74746a"/>
<path d="M60 9l22-3v4l-20 4z" fill="#a8a89e"/>
<path d="M68 18l24-7v15l-24 1z" fill="#a9a99d"/><path d="M71 15v11M76 13.500v12M81 12v14M85 10v16" stroke="#4b4b46" stroke-width="1.800"/><rect x="86.500" y="11" width="5" height="9" fill="#f6f6f0"/><rect x="80" y="13" width="2.500" height="6" fill="#e8e8e0"/><rect x="75" y="15" width="2" height="5" fill="#deded6"/>
<rect x="93" y="5" width="7" height="30" fill="#26282a"/>
<rect x="58" y="18" width="22" height="8" rx="2" fill="#343848"/><rect x="82" y="24" width="17" height="11" rx="2" fill="#35363e"/><rect x="86" y="37" width="14" height="3" fill="#5a5048"/>
<rect x="-1" y="-1" width="6" height="56" fill="#f2f2ee"/><rect x="0.500" y="0.500" width="4.500" height="5" fill="#1e1e1e"/><rect x="0" y="8" width="3" height="2.500" fill="#333"/><rect x="0" y="27" width="4.500" height="5" fill="#2a2a2a"/><rect x="0" y="33" width="3" height="14" fill="#c8c8c4"/>
<path d="M6 5h28M8 5v46M15 7v32M24 7v28M32 9v22" stroke="#e9e9e5" stroke-width="2.600" fill="none"/>
<path d="M5 29l20 11l5 6M9 51h10" stroke="#e4e4e0" stroke-width="2.800" fill="none"/>
<rect x="9" y="18" width="15" height="5" rx="1.500" fill="#34363f"/><ellipse cx="31.500" cy="11" rx="5.500" ry="4.200" fill="#262a26"/><rect x="10.500" y="8" width="3" height="8" fill="#2c2c2c"/><rect x="18" y="9" width="4" height="9" fill="#555a64"/><rect x="27" y="15" width="3" height="14" fill="#33312e"/>
<rect x="20" y="24" width="10" height="9" fill="#d8d8d2"/>
<rect x="35" y="15" width="13" height="13" fill="#bdbdb5"/><path d="M37 15v13M41 16v12M45 17v10" stroke="#4a4a4a" stroke-width="1.300"/>
<ellipse cx="26" cy="45" rx="3.200" ry="1.800" fill="#2e2a28" transform="rotate(-30 26 45)"/>
<circle cx="47.500" cy="41.500" r="3.200" fill="#33211c"/><circle cx="64" cy="41" r="3.400" fill="#33211c"/>
</g></svg>
<svg style="left:409px;top:583px;overflow:hidden" width="96" height="54" viewBox="0 0 98 54" preserveAspectRatio="none"><defs><filter id="blb" x="-5%" y="-5%" width="110%" height="110%"><feGaussianBlur stdDeviation="1"/></filter>
<linearGradient id="flrb" x1="0" y1="0" x2="1" y2="0"><stop offset="0" stop-color="#6c645a"/><stop offset="0.35" stop-color="#8d7f6a"/><stop offset="1" stop-color="#8f826d"/></linearGradient>
<linearGradient id="celb" x1="0" y1="0" x2="0" y2="1"><stop offset="0" stop-color="#484842"/><stop offset="0.42" stop-color="#55554d"/><stop offset="0.56" stop-color="#7f7f75"/><stop offset="1" stop-color="#8e8e84"/></linearGradient>
<pattern id="spkb" width="3" height="3" patternUnits="userSpaceOnUse"><rect width="1.500" height="1.500" fill="#5a4e3c" opacity=".22"/><rect x="1.500" y="1.500" width="1.500" height="1.500" fill="#b4a082" opacity=".2"/></pattern></defs>
<g filter="url(#blb)"><rect x="-2" y="-2" width="102" height="30" fill="url(#celb)"/><rect x="-2" y="25" width="102" height="32" fill="url(#flrb)"/><rect x="30" y="27" width="70" height="28" fill="url(#spkb)"/>
<path d="M-2 56v-16l30 4l12 12z" fill="#544e48"/><rect x="4" y="4" width="34" height="40" fill="#fff" opacity=".22"/>
<rect x="40" y="17" width="34" height="9" fill="#74746a"/>
<path d="M60 9l22-3v4l-20 4z" fill="#a8a89e"/>
<path d="M68 18l24-7v15l-24 1z" fill="#a9a99d"/><path d="M71 15v11M76 13.500v12M81 12v14M85 10v16" stroke="#4b4b46" stroke-width="1.800"/><rect x="86.500" y="11" width="5" height="9" fill="#f6f6f0"/><rect x="80" y="13" width="2.500" height="6" fill="#e8e8e0"/><rect x="75" y="15" width="2" height="5" fill="#deded6"/>
<rect x="93" y="5" width="7" height="30" fill="#26282a"/>
<rect x="58" y="18" width="22" height="8" rx="2" fill="#343848"/><rect x="82" y="24" width="17" height="11" rx="2" fill="#35363e"/><rect x="86" y="37" width="14" height="3" fill="#5a5048"/>
<rect x="-1" y="-1" width="6" height="56" fill="#f2f2ee"/><rect x="0.500" y="0.500" width="4.500" height="5" fill="#1e1e1e"/><rect x="0" y="8" width="3" height="2.500" fill="#333"/><rect x="0" y="27" width="4.500" height="5" fill="#2a2a2a"/><rect x="0" y="33" width="3" height="14" fill="#c8c8c4"/>
<path d="M6 5h28M8 5v46M15 7v32M24 7v28M32 9v22" stroke="#e9e9e5" stroke-width="2.600" fill="none"/>
<path d="M5 29l20 11l5 6M9 51h10" stroke="#e4e4e0" stroke-width="2.800" fill="none"/>
<rect x="9" y="18" width="15" height="5" rx="1.500" fill="#34363f"/><ellipse cx="31.500" cy="11" rx="5.500" ry="4.200" fill="#262a26"/><rect x="10.500" y="8" width="3" height="8" fill="#2c2c2c"/><rect x="18" y="9" width="4" height="9" fill="#555a64"/><rect x="27" y="15" width="3" height="14" fill="#33312e"/>
<rect x="20" y="24" width="10" height="9" fill="#d8d8d2"/>
<rect x="35" y="15" width="13" height="13" fill="#bdbdb5"/><path d="M37 15v13M41 16v12M45 17v10" stroke="#4a4a4a" stroke-width="1.300"/>
<ellipse cx="26" cy="45" rx="3.200" ry="1.800" fill="#2e2a28" transform="rotate(-30 26 45)"/>

</g><g filter="url(#blb)"><rect x="45.500" y="6.500" width="9.500" height="13" rx="1.500" fill="#1e2126"/><path d="M46 8l-4-3.500l1.500-4M54.500 8l4-3.500l-1.500-4" stroke="#c9a690" stroke-width="2.300" fill="none"/><circle cx="50.200" cy="3.300" r="2.300" fill="#b48c78"/><rect x="46" y="19" width="9" height="8" rx="1" fill="#7b98bd"/><path d="M48 27v11.500M53.500 27v11.500" stroke="#b49682" stroke-width="1.900"/><path d="M46.800 39.500h2.400M52.800 39.500h2.400" stroke="#2a2a2a" stroke-width="2"/></g></svg>
<svg style="left:582.200px;top:583px;overflow:hidden" width="96" height="54" viewBox="0 0 96 54"><defs><filter id="bl3" x="-10%" y="-10%" width="120%" height="120%"><feGaussianBlur stdDeviation="2.200"/></filter>
<linearGradient id="wd" x1="0" y1="0" x2="1" y2="0"><stop offset="0" stop-color="#6e6861"/><stop offset="0.2" stop-color="#96897a"/><stop offset="0.5" stop-color="#a69784"/><stop offset="0.66" stop-color="#8a8680"/><stop offset="0.82" stop-color="#5e5c5a"/><stop offset="1" stop-color="#2c2c2c"/></linearGradient></defs>
<rect width="96" height="54" fill="url(#wd)"/><g filter="url(#bl3)"><rect x="-4" y="-4" width="24" height="26" fill="#57534f"/><rect x="28" y="-4" width="26" height="60" fill="#a69784"/><path d="M-2 28h46M-2 35h46M-2 42h46M-2 49h46" stroke="#85776a" stroke-width="2"/><rect x="58" y="-4" width="18" height="62" fill="#7c7874"/><rect x="78" y="-4" width="24" height="62" fill="#3a3a3a"/><rect x="64" y="2" width="26" height="9" fill="#b4b4b4"/><rect x="70" y="10" width="30" height="16" fill="#555"/><rect x="56" y="28" width="16" height="7" fill="#f4f4f0"/><rect x="74" y="38" width="24" height="20" fill="#1e1e1e"/></g></svg>
<svg style="left:662px;top:598px" width="16" height="15" viewBox="0 0 16 15"><path d="M3.500 0v11.500h12M0 3.500h11.500v11.500" stroke="#f4f4f4" stroke-width="2.200" fill="none"/><path d="M3.500 0v11.500h12M0 3.500h11.500v11.500" stroke="#555" stroke-width="0.600" fill="none"/></svg>
<svg style="left:661px;top:616px" width="16" height="12" viewBox="0 0 16 12"><g fill="#f4f4f4" stroke="#f4f4f4" stroke-width="1.500" stroke-linejoin="round"><rect x="1.500" y="4.7" width="13" height="2.600" rx="1.300"/><circle cx="2.600" cy="6.0" r="1.900"/><circle cx="13.4" cy="6.0" r="1.900"/><rect x="5.6" y="1.200" width="4.800" height="9.6" rx="1.600"/></g><g fill="#b4b4bc"><rect x="1.500" y="4.7" width="13" height="2.600" rx="1.300"/><circle cx="2.600" cy="6.0" r="1.900"/><circle cx="13.4" cy="6.0" r="1.900"/><rect x="5.6" y="1.200" width="4.800" height="9.6" rx="1.600"/></g></svg>
<svg style="left:232px;top:580px" width="6" height="6" viewBox="0 0 6 6"><path d="M0 0h6l-6 6z" fill="#283cc8"/></svg>
<svg style="left:674px;top:580px" width="6" height="6" viewBox="0 0 6 6"><path d="M0 0h6v6z" fill="#283cc8"/></svg>
<svg style="left:232px;top:633px" width="7" height="7" viewBox="0 0 7 7"><path d="M0 0l6.500 6.500h-6.500z" fill="#f4f4f4" stroke="#222" stroke-width="0.800"/></svg>
<svg style="left:453px;top:637px" width="7" height="4" viewBox="0 0 7 4"><path d="M0 0h7l-3.500 3.500z" fill="#111"/></svg>
<div style="left:232px;top:644px;width:448.5px;height:10px;background:#fbfafa;border:1px solid #555;border-bottom:0;border-radius:3px 3px 0 0;"></div>
<svg style="left:232px;top:644px" width="6" height="6" viewBox="0 0 6 6"><path d="M0 0h6l-6 6z" fill="#283cc8"/></svg>
<svg style="left:674px;top:644px" width="6" height="6" viewBox="0 0 6 6"><path d="M0 0h6v6z" fill="#283cc8"/></svg>
<div style="left:350px;top:581px;width:1px;height:58px;background:repeating-linear-gradient(#9a9a9a 0,#9a9a9a 1px,transparent 1px,transparent 4px);"></div>
<div style="left:350px;top:645px;width:1px;height:8px;background:repeating-linear-gradient(#9a9a9a 0,#9a9a9a 1px,transparent 1px,transparent 4px);"></div>
<div style="left:291px;top:444px;width:1.3px;height:209px;background:#3a3a3a;"></div>
<div style="left:287px;top:430.5px;width:10px;height:13.5px;border:1px solid #8c8c8c;border-radius:3px;background:linear-gradient(90deg,#e6e6e6,#c8c8c8);"></div>
<div style="left:289.5px;top:433px;width:1px;height:8px;background:#8c8c8c;"></div>
<div style="left:291.5px;top:433px;width:1px;height:8px;background:#8c8c8c;"></div>
<div style="left:293.5px;top:433px;width:1px;height:8px;background:#8c8c8c;"></div>
<div style="left:1261px;top:399px;width:17px;height:255px;background:#f3efef;"></div>
<div style="left:1261px;top:400.5px;width:15px;height:14px;border:1px solid #8c8c8c;border-radius:2px;background:linear-gradient(#f0f0f0,#d8d8d8);"></div>
<svg style="left:1264.5px;top:403px" width="9" height="9" viewBox="0 0 9 9"><path d="M1 0v9" stroke="#111" stroke-width="1.800"/><path d="M1.500 1h6.500v4.500h-6.500" stroke="#111" stroke-width="1.800" fill="none"/></svg>
<svg style="left:1265px;top:423px" width="8" height="4" viewBox="0 0 8 4"><path d="M0 4l4-4l4 4z" fill="#444"/></svg>
<svg style="left:1265px;top:603px" width="8" height="4" viewBox="0 0 8 4"><path d="M0 0h8l-4 4z" fill="#555"/></svg>
<div style="left:1261px;top:520.5px;width:15px;height:37px;border:1px solid #9c9c9c;border-radius:2px;background:linear-gradient(90deg,#f2f2f2,#dedede 50%,#cacaca);"></div>
<div style="left:1265px;top:535px;width:7px;height:1.5px;background:#777;"></div>
<div style="left:1265px;top:538px;width:7px;height:1.5px;background:#777;"></div>
<div style="left:1265px;top:541px;width:7px;height:1.5px;background:#777;"></div>
<div style="left:1261px;top:615px;width:14.5px;height:13.5px;border:1px solid #9a9a9a;border-radius:2px;background:linear-gradient(#f6f6f6,#d6d6d6);"></div>
<div style="left:1265px;top:621px;width:7px;height:2px;background:#111;"></div>
<div style="left:1267.5px;top:618.5px;width:2px;height:7px;background:#111;"></div>
<div style="left:1262px;top:630.5px;width:13px;height:4px;background:linear-gradient(#e0e0e0,#c8c8c8);border:1px solid #c0c0c0;"></div>
<div style="left:1261px;top:638px;width:14.5px;height:13.5px;border:1px solid #9a9a9a;border-radius:2px;background:linear-gradient(#f6f6f6,#d6d6d6);"></div>
<div style="left:1265px;top:644px;width:7px;height:2px;background:#111;"></div>
<div style="left:232px;top:654px;width:1028px;height:1px;background:#c8c6c6;"></div>
<div style="left:232px;top:655px;width:1028px;height:14px;background:#f3efef;"></div>
<svg style="left:238px;top:659px" width="5" height="6" viewBox="0 0 5 6"><path d="M4.500 0v6l-4.500-3z" fill="#444"/></svg>
<svg style="left:1209.5px;top:659px" width="5" height="6" viewBox="0 0 5 6"><path d="M0 0v6l4.500-3z" fill="#555"/></svg>
<div style="left:250.5px;top:655.5px;width:732px;height:13px;border:1px solid #a8a8a8;border-radius:2px;background:linear-gradient(#f4f4f4,#e2e2e2 45%,#cecece);"></div>
<div style="left:253.5px;top:658px;width:1px;height:5px;background:#777;"></div>
<div style="left:255.5px;top:658px;width:1px;height:5px;background:#777;"></div>
<div style="left:976px;top:658px;width:1px;height:5px;background:#777;"></div>
<div style="left:978px;top:658px;width:1px;height:5px;background:#777;"></div>
<div style="left:980px;top:658px;width:1px;height:5px;background:#777;"></div>
<div style="left:1221px;top:655px;width:14.5px;height:13.5px;border:1px solid #9a9a9a;border-radius:2px;background:linear-gradient(#f6f6f6,#d6d6d6);"></div>
<div style="left:1225px;top:661px;width:7px;height:2px;background:#111;"></div>
<div style="left:1227.5px;top:658.5px;width:2px;height:7px;background:#111;"></div>
<div style="left:1237px;top:655.5px;width:5.5px;height:13px;background:linear-gradient(90deg,#e4e4e4,#c8c8c8);border:1px solid #bbb;"></div>
<div style="left:1244.5px;top:655px;width:14.5px;height:13.5px;border:1px solid #9a9a9a;border-radius:2px;background:linear-gradient(#f6f6f6,#d6d6d6);"></div>
<div style="left:1248.5px;top:661px;width:7px;height:2px;background:#111;"></div>
<div style="left:1261px;top:655px;width:14.5px;height:13.5px;border:1px solid #9a9a9a;border-radius:2px;background:linear-gradient(#f6f6f6,#d6d6d6);"></div>
<svg style="left:1264px;top:657.5px" width="10" height="10" viewBox="0 0 10 10"><circle cx="4" cy="4" r="3" fill="#fafafa" stroke="#222" stroke-width="1.200"/><path d="M6.200 6.200l3 3" stroke="#222" stroke-width="1.600"/></svg>
<svg style="left:244px;top:684.5px" width="1" height="1"><g transform="scale(1.0)"><defs><linearGradient id="tg244" x1="0" y1="0" x2="0" y2="1"><stop offset="0" stop-color="#a8a8a8"/><stop offset="1" stop-color="#7c7c7c"/></linearGradient></defs><circle cx="0" cy="0" r="6.300" fill="#f8e4e4" stroke="#de6e6e" stroke-width="1.600"/><circle cx="0" cy="0" r="3" fill="#b04848"/><circle cx="0" cy="0" r="1.100" fill="#cfa0a0"/><path d="M26.4 -4A4.500 4.500 0 1 0 28.9 0.300" fill="none" stroke="#7d7d7d" stroke-width="1.700"/><path d="M23.9 -6.800l4.200 2.500l-4.200 2.500z" fill="#7d7d7d"/><rect x="40.3" y="-5.500" width="2.600" height="11" fill="url(#tg244)"/><path d="M44.3 -5.500l12 5.500l-12 5.500z" fill="url(#tg244)"/><path d="M65.3 -5.500l14 5.500l-14 5.500z" fill="url(#tg244)"/><rect x="90.3" y="-5.500" width="4.300" height="11" fill="url(#tg244)"/><rect x="98.0" y="-5.500" width="4.300" height="11" fill="url(#tg244)"/><rect x="114.8" y="-5.700" width="12.500" height="11.400" fill="url(#tg244)"/><rect x="138.8" y="-5.500" width="2.600" height="11" fill="url(#tg244)"/><path d="M150.3 -5.500l-9.500 5.500l9.500 5.500z" fill="url(#tg244)"/><path d="M162 -5.500l9.500 5.500l-9.500 5.500z" fill="url(#tg244)"/><rect x="171" y="-5.500" width="2.600" height="11" fill="url(#tg244)"/><path d="M193.8 -5.500l-10 5.500l10 5.500z" fill="url(#tg244)"/><rect x="194.8" y="-5.500" width="2" height="11" fill="url(#tg244)"/><rect x="197.8" y="-5.500" width="2" height="11" fill="url(#tg244)"/><rect x="208.3" y="-5.500" width="2" height="11" fill="url(#tg244)"/><rect x="211.3" y="-5.500" width="2" height="11" fill="url(#tg244)"/><path d="M214.3 -5.500l10 5.500l-10 5.500z" fill="url(#tg244)"/></g></svg>
<svg style="left:1005.5px;top:677px" width="8" height="15" viewBox="0 0 8 15"><rect x="1" y="0.500" width="6" height="9" rx="2.200" fill="#b4b4b4" stroke="#5f5f5f" stroke-width="1.200"/><rect x="3" y="2" width="2" height="4" fill="#e6e6e6"/><rect x="2.500" y="9.500" width="3" height="4.500" fill="#787878"/></svg>
<div style="left:1020px;top:676.5px;width:66px;height:17px;background:#f4f2f2;border:1px solid #b4b2b2;border-right-color:#e4e2e2;border-bottom-color:#e4e2e2;"></div>
<div class="t" style="left:1023px;top:678.5px;font-size:11px;letter-spacing:0.150px;">00:00:14.29</div>
<svg style="left:1099px;top:679px" width="9" height="10" viewBox="0 0 9 10"><path d="M0 0.500l8 2v7.500z" fill="#a0aa50" stroke="#788228" stroke-width="0.600"/></svg>
<div style="left:1115px;top:676.5px;width:65px;height:17px;background:#f3efef;border:1px solid #bcbaba;border-right-color:#e6e4e4;border-bottom-color:#e6e4e4;"></div>
<div style="left:1190.5px;top:677.5px;width:15.5px;height:13.5px;background:linear-gradient(#a5a55a 0,#a5a55a 42%,#3c64a0 42%,#466eaa);"></div>
<svg style="left:1190.5px;top:677.5px" width="16" height="7" viewBox="0 0 16 7"><path d="M3 6l5-4.500l5 4.500z" fill="#7d8c6e"/></svg>
<div style="left:1208.5px;top:676.5px;width:67px;height:17px;background:#f3efef;border:1px solid #bcbaba;border-right-color:#e6e4e4;border-bottom-color:#e6e4e4;"></div>
<div style="left:231px;top:697px;width:1046px;height:1px;background:#a4a2a2;"></div>
<div style="left:1277px;top:399px;width:1px;height:299px;background:#d8d6d6;"></div>
<div style="left:1052px;top:703px;width:228px;height:17px;background:#f2eeee;"></div>
<div style="left:1051.5px;top:703px;width:1px;height:17px;background:#a8a6a6;"></div>
<div style="left:1052px;top:703px;width:228px;height:1px;background:#a8a6a6;"></div>
<div class="t" style="left:1055px;top:705px;font-size:11px;letter-spacing:-0.080px;">Record Time (2 channels): 01:12:25</div>
</body></html>
